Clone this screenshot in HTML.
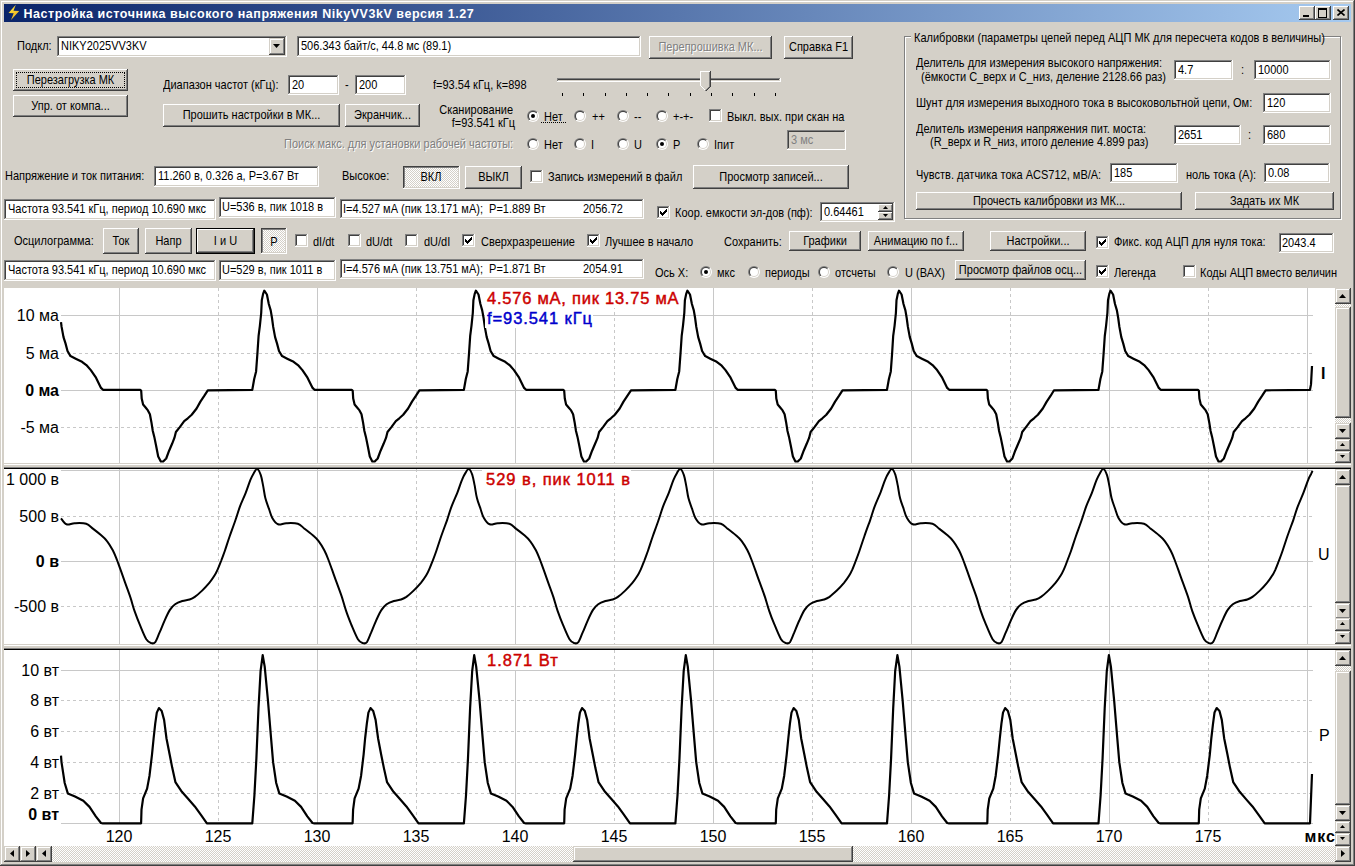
<!DOCTYPE html><html><head><meta charset="utf-8"><style>
html,body{margin:0;padding:0;width:1355px;height:866px;overflow:hidden;background:#D4D0C8}
body{position:relative;font-family:"Liberation Sans",sans-serif;font-size:11px}
body div, body svg{position:absolute}
.t{white-space:pre}
</style></head><body>
<svg width="0" height="0" style="position:absolute"><defs><linearGradient id="rgO" x1="0" y1="0" x2="1" y2="1"><stop offset="0.5" stop-color="#808080"/><stop offset="0.5" stop-color="#FFFFFF"/></linearGradient><linearGradient id="rgI" x1="0" y1="0" x2="1" y2="1"><stop offset="0.5" stop-color="#404040"/><stop offset="0.5" stop-color="#D4D0C8"/></linearGradient><pattern id="dith" width="2" height="2" patternUnits="userSpaceOnUse"><rect width="1" height="1" fill="#fff"/><rect x="1" y="1" width="1" height="1" fill="#fff"/></pattern></defs></svg>
<div style="left:0px;top:0px;width:1355px;height:866px;background:#404040"></div>
<div style="left:0px;top:0px;width:1354px;height:865px;background:#D4D0C8"></div>
<div style="left:1px;top:1px;width:1353px;height:864px;background:#808080"></div>
<div style="left:1px;top:1px;width:1352px;height:863px;background:#FFFFFF"></div>
<div style="left:2px;top:2px;width:1351px;height:862px;background:#D4D0C8"></div>
<div style="left:4px;top:4px;width:1347px;height:18px;background:linear-gradient(to right,#0A246A,#A6CAF0)"></div>
<svg style="left:0;top:0" width="24" height="24" viewBox="0 0 24 24"><defs><linearGradient id="bolt" x1="0" y1="0" x2="0.6" y2="1"><stop offset="0" stop-color="#FFEE40"/><stop offset="1" stop-color="#F0B020"/></linearGradient></defs><path d="M15.8 4.8L8.5 12.9L13.7 13.2L11 20L19.2 11.1L13.5 10.8z" fill="url(#bolt)"/></svg>
<div class="t" style="top:7px;font-size:12.5px;line-height:14.5px;color:#fff;font-weight:700;letter-spacing:0.54px;left:23.5px;">Настройка источника высокого напряжения NikyVV3kV версия 1.27</div>
<div style="left:1299px;top:6px;width:16px;height:14px;background:#404040"></div>
<div style="left:1299px;top:6px;width:15px;height:13px;background:#FFFFFF"></div>
<div style="left:1300px;top:7px;width:14px;height:12px;background:#808080"></div>
<div style="left:1300px;top:7px;width:13px;height:11px;background:#D4D0C8"></div>
<div style="left:1301px;top:8px;width:12px;height:10px;background:#D4D0C8"></div>
<div style="left:1303px;top:15px;width:6px;height:2px;background:#000"></div>
<div style="left:1315px;top:6px;width:16px;height:14px;background:#404040"></div>
<div style="left:1315px;top:6px;width:15px;height:13px;background:#FFFFFF"></div>
<div style="left:1316px;top:7px;width:14px;height:12px;background:#808080"></div>
<div style="left:1316px;top:7px;width:13px;height:11px;background:#D4D0C8"></div>
<div style="left:1317px;top:8px;width:12px;height:10px;background:#D4D0C8"></div>
<div style="left:1318px;top:8px;width:7px;height:7px;border:1px solid #000;border-top-width:2px"></div>
<div style="left:1333px;top:6px;width:16px;height:14px;background:#404040"></div>
<div style="left:1333px;top:6px;width:15px;height:13px;background:#FFFFFF"></div>
<div style="left:1334px;top:7px;width:14px;height:12px;background:#808080"></div>
<div style="left:1334px;top:7px;width:13px;height:11px;background:#D4D0C8"></div>
<div style="left:1335px;top:8px;width:12px;height:10px;background:#D4D0C8"></div>
<svg style="left:1337px;top:9px" width="8" height="7" viewBox="0 0 8 7"><path d="M0.5 0.5L7.5 6.5M7.5 0.5L0.5 6.5" stroke="#000" stroke-width="1.6"/></svg>
<div class="t" style="top:39px;font-size:11px;line-height:13px;color:#000;left:17px;transform:scaleY(1.12);transform-origin:0 2px;">Подкл:</div>
<div style="left:57px;top:36px;width:230px;height:21px;background:#FFFFFF"></div>
<div style="left:57px;top:36px;width:229px;height:20px;background:#808080"></div>
<div style="left:58px;top:37px;width:228px;height:19px;background:#D4D0C8"></div>
<div style="left:58px;top:37px;width:227px;height:18px;background:#404040"></div>
<div style="left:59px;top:38px;width:226px;height:17px;background:#fff"></div>
<div style="left:269px;top:38px;width:16px;height:17px;background:#404040"></div>
<div style="left:269px;top:38px;width:15px;height:16px;background:#D4D0C8"></div>
<div style="left:270px;top:39px;width:14px;height:15px;background:#808080"></div>
<div style="left:270px;top:39px;width:13px;height:14px;background:#FFFFFF"></div>
<div style="left:271px;top:40px;width:12px;height:13px;background:#D4D0C8"></div>
<svg style="left:273px;top:44px" width="8" height="5" viewBox="0 0 8 5"><path d="M0 0h7l-3.5 4z" fill="#000"/></svg>
<div class="t" style="top:39px;font-size:11px;line-height:13px;color:#000;left:61px;transform:scaleY(1.12);transform-origin:0 2px;">NIKY2025VV3KV</div>
<div style="left:297px;top:36px;width:344px;height:21px;background:#FFFFFF"></div>
<div style="left:297px;top:36px;width:343px;height:20px;background:#808080"></div>
<div style="left:298px;top:37px;width:342px;height:19px;background:#D4D0C8"></div>
<div style="left:298px;top:37px;width:341px;height:18px;background:#404040"></div>
<div style="left:299px;top:38px;width:340px;height:17px;background:#fff"></div>
<div class="t" style="top:39px;font-size:11px;line-height:13px;color:#000;left:301px;transform:scaleY(1.12);transform-origin:0 2px;">506.343 байт/с, 44.8 мс (89.1)</div>
<div style="left:649px;top:36px;width:123px;height:23px;background:#404040"></div>
<div style="left:649px;top:36px;width:122px;height:22px;background:#FFFFFF"></div>
<div style="left:650px;top:37px;width:121px;height:21px;background:#808080"></div>
<div style="left:650px;top:37px;width:120px;height:20px;background:#D4D0C8"></div>
<div style="left:651px;top:38px;width:119px;height:19px;background:#D4D0C8"></div>
<div class="t" style="top:41px;font-size:11px;line-height:13px;color:#fff;left:411.5px;width:600px;text-align:center;transform:scaleY(1.12);transform-origin:0 2px;">Перепрошивка МК...</div>
<div class="t" style="top:40px;font-size:11px;line-height:13px;color:#808080;left:410.5px;width:600px;text-align:center;transform:scaleY(1.12);transform-origin:0 2px;">Перепрошивка МК...</div>
<div style="left:784px;top:36px;width:69px;height:23px;background:#404040"></div>
<div style="left:784px;top:36px;width:68px;height:22px;background:#FFFFFF"></div>
<div style="left:785px;top:37px;width:67px;height:21px;background:#808080"></div>
<div style="left:785px;top:37px;width:66px;height:20px;background:#D4D0C8"></div>
<div style="left:786px;top:38px;width:65px;height:19px;background:#D4D0C8"></div>
<div class="t" style="top:40px;font-size:11px;line-height:13px;color:#000;left:518.5px;width:600px;text-align:center;transform:scaleY(1.12);transform-origin:0 2px;">Справка F1</div>
<div style="left:13px;top:69px;width:115px;height:22px;background:#404040"></div>
<div style="left:13px;top:69px;width:114px;height:21px;background:#FFFFFF"></div>
<div style="left:14px;top:70px;width:113px;height:20px;background:#808080"></div>
<div style="left:14px;top:70px;width:112px;height:19px;background:#D4D0C8"></div>
<div style="left:15px;top:71px;width:111px;height:18px;background:#D4D0C8"></div>
<div class="t" style="top:73px;font-size:11px;line-height:13px;color:#000;left:-229.5px;width:600px;text-align:center;transform:scaleY(1.12);transform-origin:0 2px;">Перезагрузка МК</div>
<div style="left:16px;top:72px;width:107px;height:14px;border:1px dotted #000"></div>
<div style="left:13px;top:95px;width:115px;height:22px;background:#404040"></div>
<div style="left:13px;top:95px;width:114px;height:21px;background:#FFFFFF"></div>
<div style="left:14px;top:96px;width:113px;height:20px;background:#808080"></div>
<div style="left:14px;top:96px;width:112px;height:19px;background:#D4D0C8"></div>
<div style="left:15px;top:97px;width:111px;height:18px;background:#D4D0C8"></div>
<div class="t" style="top:99px;font-size:11px;line-height:13px;color:#000;left:-229.5px;width:600px;text-align:center;transform:scaleY(1.12);transform-origin:0 2px;">Упр. от компа...</div>
<div class="t" style="top:78px;font-size:11px;line-height:13px;color:#000;left:163px;transform:scaleY(1.12);transform-origin:0 2px;">Диапазон частот (кГц):</div>
<div style="left:288px;top:75px;width:51px;height:20px;background:#FFFFFF"></div>
<div style="left:288px;top:75px;width:50px;height:19px;background:#808080"></div>
<div style="left:289px;top:76px;width:49px;height:18px;background:#D4D0C8"></div>
<div style="left:289px;top:76px;width:48px;height:17px;background:#404040"></div>
<div style="left:290px;top:77px;width:47px;height:16px;background:#fff"></div>
<div class="t" style="top:78px;font-size:11px;line-height:13px;color:#000;left:292px;transform:scaleY(1.12);transform-origin:0 2px;">20</div>
<div class="t" style="top:78px;font-size:11px;line-height:13px;color:#000;left:345px;transform:scaleY(1.12);transform-origin:0 2px;">-</div>
<div style="left:355px;top:75px;width:51px;height:20px;background:#FFFFFF"></div>
<div style="left:355px;top:75px;width:50px;height:19px;background:#808080"></div>
<div style="left:356px;top:76px;width:49px;height:18px;background:#D4D0C8"></div>
<div style="left:356px;top:76px;width:48px;height:17px;background:#404040"></div>
<div style="left:357px;top:77px;width:47px;height:16px;background:#fff"></div>
<div class="t" style="top:78px;font-size:11px;line-height:13px;color:#000;left:359px;transform:scaleY(1.12);transform-origin:0 2px;">200</div>
<div class="t" style="top:78px;font-size:11px;line-height:13px;color:#000;left:433px;transform:scaleY(1.12);transform-origin:0 2px;">f=93.54 кГц, k=898</div>
<div style="left:557px;top:78px;width:224px;height:4px;background:#FFFFFF"></div>
<div style="left:557px;top:78px;width:223px;height:3px;background:#808080"></div>
<div style="left:558px;top:79px;width:222px;height:2px;background:#D4D0C8"></div>
<div style="left:558px;top:79px;width:221px;height:1px;background:#404040"></div>
<div style="left:559px;top:80px;width:220px;height:0px;background:#fff"></div>
<div style="left:562px;top:93px;width:1px;height:3px;background:#000"></div>
<div style="left:583px;top:93px;width:1px;height:3px;background:#000"></div>
<div style="left:605px;top:93px;width:1px;height:3px;background:#000"></div>
<div style="left:626px;top:93px;width:1px;height:3px;background:#000"></div>
<div style="left:647px;top:93px;width:1px;height:3px;background:#000"></div>
<div style="left:668px;top:93px;width:1px;height:3px;background:#000"></div>
<div style="left:690px;top:93px;width:1px;height:3px;background:#000"></div>
<div style="left:711px;top:93px;width:1px;height:3px;background:#000"></div>
<div style="left:732px;top:93px;width:1px;height:3px;background:#000"></div>
<div style="left:754px;top:93px;width:1px;height:3px;background:#000"></div>
<div style="left:775px;top:93px;width:1px;height:3px;background:#000"></div>
<svg style="left:700px;top:71px" width="11" height="21" viewBox="0 0 11 21" shape-rendering="crispEdges"><path d="M0 0H11V15L6 20H5L0 15z" fill="#404040"/><path d="M0 0H10V15L5.5 19.5L0 15z" fill="#808080"/><path d="M0 0H10V1H1V15L5 19V20L0 15z" fill="#fff"/><path d="M1 1H9V15L5.5 18.5L1 15z" fill="#D4D0C8"/></svg>
<div style="left:163px;top:104px;width:177px;height:23px;background:#404040"></div>
<div style="left:163px;top:104px;width:176px;height:22px;background:#FFFFFF"></div>
<div style="left:164px;top:105px;width:175px;height:21px;background:#808080"></div>
<div style="left:164px;top:105px;width:174px;height:20px;background:#D4D0C8"></div>
<div style="left:165px;top:106px;width:173px;height:19px;background:#D4D0C8"></div>
<div class="t" style="top:108px;font-size:11px;line-height:13px;color:#000;left:-48.5px;width:600px;text-align:center;transform:scaleY(1.12);transform-origin:0 2px;">Прошить настройки в МК...</div>
<div style="left:345px;top:104px;width:75px;height:23px;background:#404040"></div>
<div style="left:345px;top:104px;width:74px;height:22px;background:#FFFFFF"></div>
<div style="left:346px;top:105px;width:73px;height:21px;background:#808080"></div>
<div style="left:346px;top:105px;width:72px;height:20px;background:#D4D0C8"></div>
<div style="left:347px;top:106px;width:71px;height:19px;background:#D4D0C8"></div>
<div class="t" style="top:108px;font-size:11px;line-height:13px;color:#000;left:82.5px;width:600px;text-align:center;transform:scaleY(1.12);transform-origin:0 2px;">Экранчик...</div>
<div class="t" style="top:103px;font-size:11px;line-height:13px;color:#000;right:842px;text-align:right;transform:scaleY(1.12);transform-origin:0 2px;">Сканирование</div>
<div class="t" style="top:116px;font-size:11px;line-height:13px;color:#000;right:840px;text-align:right;transform:scaleY(1.12);transform-origin:0 2px;">f=93.541 кГц</div>
<svg style="left:527px;top:110px" width="12" height="12" viewBox="0 0 12 12"><circle cx="6" cy="6" r="6" fill="url(#rgO)"/><circle cx="6" cy="6" r="5" fill="url(#rgI)"/><circle cx="6" cy="6" r="4" fill="#fff"/><circle cx="6" cy="6" r="2" fill="#000"/></svg>
<div class="t" style="top:110px;font-size:11px;line-height:13px;color:#000;left:544px;transform:scaleY(1.12);transform-origin:0 2px;">Нет</div>
<div style="left:541px;top:122px;width:25px;height:0;border-top:1px dotted #000"></div>
<svg style="left:574px;top:110px" width="12" height="12" viewBox="0 0 12 12"><circle cx="6" cy="6" r="6" fill="url(#rgO)"/><circle cx="6" cy="6" r="5" fill="url(#rgI)"/><circle cx="6" cy="6" r="4" fill="#fff"/></svg>
<div class="t" style="top:110px;font-size:11px;line-height:13px;color:#000;left:592px;transform:scaleY(1.12);transform-origin:0 2px;">++</div>
<svg style="left:617px;top:110px" width="12" height="12" viewBox="0 0 12 12"><circle cx="6" cy="6" r="6" fill="url(#rgO)"/><circle cx="6" cy="6" r="5" fill="url(#rgI)"/><circle cx="6" cy="6" r="4" fill="#fff"/></svg>
<div class="t" style="top:110px;font-size:11px;line-height:13px;color:#000;left:634px;transform:scaleY(1.12);transform-origin:0 2px;">--</div>
<svg style="left:656px;top:110px" width="12" height="12" viewBox="0 0 12 12"><circle cx="6" cy="6" r="6" fill="url(#rgO)"/><circle cx="6" cy="6" r="5" fill="url(#rgI)"/><circle cx="6" cy="6" r="4" fill="#fff"/></svg>
<div class="t" style="top:110px;font-size:11px;line-height:13px;color:#000;left:673px;transform:scaleY(1.12);transform-origin:0 2px;">+-+-</div>
<div style="left:709px;top:109px;width:13px;height:13px;background:#FFFFFF"></div>
<div style="left:709px;top:109px;width:12px;height:12px;background:#808080"></div>
<div style="left:710px;top:110px;width:11px;height:11px;background:#D4D0C8"></div>
<div style="left:710px;top:110px;width:10px;height:10px;background:#404040"></div>
<div style="left:711px;top:111px;width:9px;height:9px;background:#fff"></div>
<div class="t" style="top:110px;font-size:11px;line-height:13px;color:#000;left:727px;transform:scaleY(1.12);transform-origin:0 2px;">Выкл. вых. при скан на</div>
<div class="t" style="top:138px;font-size:11px;line-height:13px;color:#fff;left:285px;transform:scaleY(1.12);transform-origin:0 2px;">Поиск макс. для установки рабочей частоты:</div>
<div class="t" style="top:137px;font-size:11px;line-height:13px;color:#808080;left:284px;transform:scaleY(1.12);transform-origin:0 2px;">Поиск макс. для установки рабочей частоты:</div>
<svg style="left:527px;top:138px" width="12" height="12" viewBox="0 0 12 12"><circle cx="6" cy="6" r="6" fill="url(#rgO)"/><circle cx="6" cy="6" r="5" fill="url(#rgI)"/><circle cx="6" cy="6" r="4" fill="#fff"/></svg>
<div class="t" style="top:138px;font-size:11px;line-height:13px;color:#000;left:544px;transform:scaleY(1.12);transform-origin:0 2px;">Нет</div>
<svg style="left:574px;top:138px" width="12" height="12" viewBox="0 0 12 12"><circle cx="6" cy="6" r="6" fill="url(#rgO)"/><circle cx="6" cy="6" r="5" fill="url(#rgI)"/><circle cx="6" cy="6" r="4" fill="#fff"/></svg>
<div class="t" style="top:138px;font-size:11px;line-height:13px;color:#000;left:591px;transform:scaleY(1.12);transform-origin:0 2px;">I</div>
<svg style="left:617px;top:138px" width="12" height="12" viewBox="0 0 12 12"><circle cx="6" cy="6" r="6" fill="url(#rgO)"/><circle cx="6" cy="6" r="5" fill="url(#rgI)"/><circle cx="6" cy="6" r="4" fill="#fff"/></svg>
<div class="t" style="top:138px;font-size:11px;line-height:13px;color:#000;left:634px;transform:scaleY(1.12);transform-origin:0 2px;">U</div>
<svg style="left:656px;top:138px" width="12" height="12" viewBox="0 0 12 12"><circle cx="6" cy="6" r="6" fill="url(#rgO)"/><circle cx="6" cy="6" r="5" fill="url(#rgI)"/><circle cx="6" cy="6" r="4" fill="#fff"/><circle cx="6" cy="6" r="2" fill="#000"/></svg>
<div class="t" style="top:138px;font-size:11px;line-height:13px;color:#000;left:673px;transform:scaleY(1.12);transform-origin:0 2px;">P</div>
<svg style="left:697px;top:138px" width="12" height="12" viewBox="0 0 12 12"><circle cx="6" cy="6" r="6" fill="url(#rgO)"/><circle cx="6" cy="6" r="5" fill="url(#rgI)"/><circle cx="6" cy="6" r="4" fill="#fff"/></svg>
<div class="t" style="top:138px;font-size:11px;line-height:13px;color:#000;left:714px;transform:scaleY(1.12);transform-origin:0 2px;">Iпит</div>
<div style="left:787px;top:130px;width:59px;height:20px;background:#FFFFFF"></div>
<div style="left:787px;top:130px;width:58px;height:19px;background:#808080"></div>
<div style="left:788px;top:131px;width:57px;height:18px;background:#D4D0C8"></div>
<div style="left:788px;top:131px;width:56px;height:17px;background:#404040"></div>
<div style="left:789px;top:132px;width:55px;height:16px;background:#D4D0C8"></div>
<div class="t" style="top:133px;font-size:11px;line-height:13px;color:#808080;left:791px;transform:scaleY(1.12);transform-origin:0 2px;">3 мс</div>
<div class="t" style="top:169px;font-size:11px;line-height:13px;color:#000;left:5px;transform:scaleY(1.12);transform-origin:0 2px;">Напряжение и ток питания:</div>
<div style="left:154px;top:166px;width:165px;height:21px;background:#FFFFFF"></div>
<div style="left:154px;top:166px;width:164px;height:20px;background:#808080"></div>
<div style="left:155px;top:167px;width:163px;height:19px;background:#D4D0C8"></div>
<div style="left:155px;top:167px;width:162px;height:18px;background:#404040"></div>
<div style="left:156px;top:168px;width:161px;height:17px;background:#fff"></div>
<div class="t" style="top:169px;font-size:11px;line-height:13px;color:#000;left:158px;transform:scaleY(1.12);transform-origin:0 2px;">11.260 в, 0.326 а, P=3.67 Вт</div>
<div class="t" style="top:169px;font-size:11px;line-height:13px;color:#000;left:342px;transform:scaleY(1.12);transform-origin:0 2px;">Высокое:</div>
<div style="left:403px;top:166px;width:57px;height:23px;background:#FFFFFF"></div>
<div style="left:403px;top:166px;width:56px;height:22px;background:#404040"></div>
<div style="left:404px;top:167px;width:55px;height:21px;background:#D4D0C8"></div>
<div style="left:404px;top:167px;width:54px;height:20px;background:#808080"></div>
<svg style="left:405px;top:168px" width="53" height="19" shape-rendering="crispEdges"><rect width="53" height="19" fill="#D4D0C8"/><rect width="53" height="19" fill="url(#dith)"/></svg>
<div class="t" style="top:170px;font-size:11px;line-height:13px;color:#000;left:131px;width:600px;text-align:center;transform:scaleY(1.12);transform-origin:0 2px;">ВКЛ</div>
<div style="left:465px;top:166px;width:57px;height:23px;background:#404040"></div>
<div style="left:465px;top:166px;width:56px;height:22px;background:#FFFFFF"></div>
<div style="left:466px;top:167px;width:55px;height:21px;background:#808080"></div>
<div style="left:466px;top:167px;width:54px;height:20px;background:#D4D0C8"></div>
<div style="left:467px;top:168px;width:53px;height:19px;background:#D4D0C8"></div>
<div class="t" style="top:170px;font-size:11px;line-height:13px;color:#000;left:193.5px;width:600px;text-align:center;transform:scaleY(1.12);transform-origin:0 2px;">ВЫКЛ</div>
<div style="left:530px;top:170px;width:13px;height:13px;background:#FFFFFF"></div>
<div style="left:530px;top:170px;width:12px;height:12px;background:#808080"></div>
<div style="left:531px;top:171px;width:11px;height:11px;background:#D4D0C8"></div>
<div style="left:531px;top:171px;width:10px;height:10px;background:#404040"></div>
<div style="left:532px;top:172px;width:9px;height:9px;background:#fff"></div>
<div class="t" style="top:170px;font-size:11px;line-height:13px;color:#000;left:548px;transform:scaleY(1.12);transform-origin:0 2px;">Запись измерений в файл</div>
<div style="left:693px;top:165px;width:156px;height:24px;background:#404040"></div>
<div style="left:693px;top:165px;width:155px;height:23px;background:#FFFFFF"></div>
<div style="left:694px;top:166px;width:154px;height:22px;background:#808080"></div>
<div style="left:694px;top:166px;width:153px;height:21px;background:#D4D0C8"></div>
<div style="left:695px;top:167px;width:152px;height:20px;background:#D4D0C8"></div>
<div class="t" style="top:170px;font-size:11px;line-height:13px;color:#000;left:471.0px;width:600px;text-align:center;transform:scaleY(1.12);transform-origin:0 2px;">Просмотр записей...</div>
<div style="left:4px;top:199px;width:212px;height:21px;background:#FFFFFF"></div>
<div style="left:4px;top:199px;width:211px;height:20px;background:#808080"></div>
<div style="left:5px;top:200px;width:210px;height:19px;background:#D4D0C8"></div>
<div style="left:5px;top:200px;width:209px;height:18px;background:#404040"></div>
<div style="left:6px;top:201px;width:208px;height:17px;background:#fff"></div>
<div class="t" style="top:202px;font-size:11px;line-height:13px;color:#000;left:8px;transform:scaleY(1.12);transform-origin:0 2px;">Частота 93.541 кГц, период 10.690 мкс</div>
<div style="left:219px;top:197px;width:117px;height:21px;background:#FFFFFF"></div>
<div style="left:219px;top:197px;width:116px;height:20px;background:#808080"></div>
<div style="left:220px;top:198px;width:115px;height:19px;background:#D4D0C8"></div>
<div style="left:220px;top:198px;width:114px;height:18px;background:#404040"></div>
<div style="left:221px;top:199px;width:113px;height:17px;background:#fff"></div>
<div class="t" style="top:200px;font-size:11px;line-height:13px;color:#000;left:222px;transform:scaleY(1.12);transform-origin:0 2px;">U=536 в, пик 1018 в</div>
<div style="left:340px;top:199px;width:304px;height:20px;background:#FFFFFF"></div>
<div style="left:340px;top:199px;width:303px;height:19px;background:#808080"></div>
<div style="left:341px;top:200px;width:302px;height:18px;background:#D4D0C8"></div>
<div style="left:341px;top:200px;width:301px;height:17px;background:#404040"></div>
<div style="left:342px;top:201px;width:300px;height:16px;background:#fff"></div>
<div class="t" style="top:202px;font-size:11px;line-height:13px;color:#000;left:343px;transform:scaleY(1.12);transform-origin:0 2px;">I=4.527 мА (пик 13.171 мА);&nbsp; P=1.889 Вт</div>
<div class="t" style="top:202px;font-size:11px;line-height:13px;color:#000;left:583px;transform:scaleY(1.12);transform-origin:0 2px;">2056.72</div>
<div style="left:657px;top:206px;width:13px;height:13px;background:#FFFFFF"></div>
<div style="left:657px;top:206px;width:12px;height:12px;background:#808080"></div>
<div style="left:658px;top:207px;width:11px;height:11px;background:#D4D0C8"></div>
<div style="left:658px;top:207px;width:10px;height:10px;background:#404040"></div>
<div style="left:659px;top:208px;width:9px;height:9px;background:#fff"></div>
<svg style="left:660px;top:209px" width="7" height="7" viewBox="0 0 7 7" shape-rendering="crispEdges"><path d="M6 0h1v3h-1v1h-1v1h-1v1h-1v1h-1v-1h-1v-1h-1v-3h1v1h1v1h1v-1h1v-1h1v-1h1z" fill="#000"/></svg>
<div class="t" style="top:206px;font-size:11px;line-height:13px;color:#000;left:675px;transform:scaleY(1.12);transform-origin:0 2px;">Коор. емкости эл-дов (пф):</div>
<div style="left:820px;top:202px;width:75px;height:20px;background:#FFFFFF"></div>
<div style="left:820px;top:202px;width:74px;height:19px;background:#808080"></div>
<div style="left:821px;top:203px;width:73px;height:18px;background:#D4D0C8"></div>
<div style="left:821px;top:203px;width:72px;height:17px;background:#404040"></div>
<div style="left:822px;top:204px;width:71px;height:16px;background:#fff"></div>
<div class="t" style="top:205px;font-size:11px;line-height:13px;color:#000;left:824px;transform:scaleY(1.12);transform-origin:0 2px;">0.64461</div>
<div style="left:878px;top:204px;width:15px;height:8px;background:#404040"></div>
<div style="left:878px;top:204px;width:14px;height:7px;background:#FFFFFF"></div>
<div style="left:879px;top:205px;width:13px;height:6px;background:#808080"></div>
<div style="left:879px;top:205px;width:12px;height:5px;background:#D4D0C8"></div>
<div style="left:880px;top:206px;width:11px;height:4px;background:#D4D0C8"></div>
<div style="left:878px;top:212px;width:15px;height:8px;background:#404040"></div>
<div style="left:878px;top:212px;width:14px;height:7px;background:#FFFFFF"></div>
<div style="left:879px;top:213px;width:13px;height:6px;background:#808080"></div>
<div style="left:879px;top:213px;width:12px;height:5px;background:#D4D0C8"></div>
<div style="left:880px;top:214px;width:11px;height:4px;background:#D4D0C8"></div>
<svg style="left:883px;top:206px" width="5" height="3"><path d="M0 3h5L2.5 0z" fill="#000"/></svg>
<svg style="left:883px;top:214px" width="5" height="3"><path d="M0 0h5L2.5 3z" fill="#000"/></svg>
<div class="t" style="top:234px;font-size:11px;line-height:13px;color:#000;left:14px;transform:scaleY(1.12);transform-origin:0 2px;">Осцилограмма:</div>
<div style="left:103px;top:228px;width:36px;height:26px;background:#404040"></div>
<div style="left:103px;top:228px;width:35px;height:25px;background:#FFFFFF"></div>
<div style="left:104px;top:229px;width:34px;height:24px;background:#808080"></div>
<div style="left:104px;top:229px;width:33px;height:23px;background:#D4D0C8"></div>
<div style="left:105px;top:230px;width:32px;height:22px;background:#D4D0C8"></div>
<div class="t" style="top:234px;font-size:11px;line-height:13px;color:#000;left:-179.0px;width:600px;text-align:center;transform:scaleY(1.12);transform-origin:0 2px;">Ток</div>
<div style="left:145px;top:228px;width:47px;height:26px;background:#404040"></div>
<div style="left:145px;top:228px;width:46px;height:25px;background:#FFFFFF"></div>
<div style="left:146px;top:229px;width:45px;height:24px;background:#808080"></div>
<div style="left:146px;top:229px;width:44px;height:23px;background:#D4D0C8"></div>
<div style="left:147px;top:230px;width:43px;height:22px;background:#D4D0C8"></div>
<div class="t" style="top:234px;font-size:11px;line-height:13px;color:#000;left:-131.5px;width:600px;text-align:center;transform:scaleY(1.12);transform-origin:0 2px;">Напр</div>
<div style="left:196px;top:228px;width:59px;height:26px;background:#000"></div>
<div style="left:197px;top:229px;width:57px;height:24px;background:#404040"></div>
<div style="left:197px;top:229px;width:56px;height:23px;background:#FFFFFF"></div>
<div style="left:198px;top:230px;width:55px;height:22px;background:#808080"></div>
<div style="left:198px;top:230px;width:54px;height:21px;background:#D4D0C8"></div>
<div style="left:199px;top:231px;width:53px;height:20px;background:#D4D0C8"></div>
<div class="t" style="top:234px;font-size:11px;line-height:13px;color:#000;left:-74.5px;width:600px;text-align:center;transform:scaleY(1.12);transform-origin:0 2px;">I и U</div>
<div style="left:261px;top:228px;width:26px;height:26px;background:#FFFFFF"></div>
<div style="left:261px;top:228px;width:25px;height:25px;background:#404040"></div>
<div style="left:262px;top:229px;width:24px;height:24px;background:#D4D0C8"></div>
<div style="left:262px;top:229px;width:23px;height:23px;background:#808080"></div>
<svg style="left:263px;top:230px" width="22" height="22" shape-rendering="crispEdges"><rect width="22" height="22" fill="#D4D0C8"/><rect width="22" height="22" fill="url(#dith)"/></svg>
<div class="t" style="top:235px;font-size:11px;line-height:13px;color:#000;left:-26px;width:600px;text-align:center;transform:scaleY(1.12);transform-origin:0 2px;">P</div>
<div style="left:295px;top:234px;width:13px;height:13px;background:#FFFFFF"></div>
<div style="left:295px;top:234px;width:12px;height:12px;background:#808080"></div>
<div style="left:296px;top:235px;width:11px;height:11px;background:#D4D0C8"></div>
<div style="left:296px;top:235px;width:10px;height:10px;background:#404040"></div>
<div style="left:297px;top:236px;width:9px;height:9px;background:#fff"></div>
<div class="t" style="top:235px;font-size:11px;line-height:13px;color:#000;left:313px;transform:scaleY(1.12);transform-origin:0 2px;">dI/dt</div>
<div style="left:348px;top:234px;width:13px;height:13px;background:#FFFFFF"></div>
<div style="left:348px;top:234px;width:12px;height:12px;background:#808080"></div>
<div style="left:349px;top:235px;width:11px;height:11px;background:#D4D0C8"></div>
<div style="left:349px;top:235px;width:10px;height:10px;background:#404040"></div>
<div style="left:350px;top:236px;width:9px;height:9px;background:#fff"></div>
<div class="t" style="top:235px;font-size:11px;line-height:13px;color:#000;left:366px;transform:scaleY(1.12);transform-origin:0 2px;">dU/dt</div>
<div style="left:405px;top:234px;width:13px;height:13px;background:#FFFFFF"></div>
<div style="left:405px;top:234px;width:12px;height:12px;background:#808080"></div>
<div style="left:406px;top:235px;width:11px;height:11px;background:#D4D0C8"></div>
<div style="left:406px;top:235px;width:10px;height:10px;background:#404040"></div>
<div style="left:407px;top:236px;width:9px;height:9px;background:#fff"></div>
<div class="t" style="top:235px;font-size:11px;line-height:13px;color:#000;left:424px;transform:scaleY(1.12);transform-origin:0 2px;">dU/dI</div>
<div style="left:462px;top:234px;width:13px;height:13px;background:#FFFFFF"></div>
<div style="left:462px;top:234px;width:12px;height:12px;background:#808080"></div>
<div style="left:463px;top:235px;width:11px;height:11px;background:#D4D0C8"></div>
<div style="left:463px;top:235px;width:10px;height:10px;background:#404040"></div>
<div style="left:464px;top:236px;width:9px;height:9px;background:#fff"></div>
<svg style="left:465px;top:237px" width="7" height="7" viewBox="0 0 7 7" shape-rendering="crispEdges"><path d="M6 0h1v3h-1v1h-1v1h-1v1h-1v1h-1v-1h-1v-1h-1v-3h1v1h1v1h1v-1h1v-1h1v-1h1z" fill="#000"/></svg>
<div class="t" style="top:235px;font-size:11px;line-height:13px;color:#000;left:481px;transform:scaleY(1.12);transform-origin:0 2px;">Сверхразрешение</div>
<div style="left:587px;top:234px;width:13px;height:13px;background:#FFFFFF"></div>
<div style="left:587px;top:234px;width:12px;height:12px;background:#808080"></div>
<div style="left:588px;top:235px;width:11px;height:11px;background:#D4D0C8"></div>
<div style="left:588px;top:235px;width:10px;height:10px;background:#404040"></div>
<div style="left:589px;top:236px;width:9px;height:9px;background:#fff"></div>
<svg style="left:590px;top:237px" width="7" height="7" viewBox="0 0 7 7" shape-rendering="crispEdges"><path d="M6 0h1v3h-1v1h-1v1h-1v1h-1v1h-1v-1h-1v-1h-1v-3h1v1h1v1h1v-1h1v-1h1v-1h1z" fill="#000"/></svg>
<div class="t" style="top:235px;font-size:11px;line-height:13px;color:#000;left:605px;transform:scaleY(1.12);transform-origin:0 2px;">Лучшее в начало</div>
<div class="t" style="top:235px;font-size:11px;line-height:13px;color:#000;left:724px;transform:scaleY(1.12);transform-origin:0 2px;">Сохранить:</div>
<div style="left:789px;top:231px;width:72px;height:20px;background:#404040"></div>
<div style="left:789px;top:231px;width:71px;height:19px;background:#FFFFFF"></div>
<div style="left:790px;top:232px;width:70px;height:18px;background:#808080"></div>
<div style="left:790px;top:232px;width:69px;height:17px;background:#D4D0C8"></div>
<div style="left:791px;top:233px;width:68px;height:16px;background:#D4D0C8"></div>
<div class="t" style="top:234px;font-size:11px;line-height:13px;color:#000;left:525.0px;width:600px;text-align:center;transform:scaleY(1.12);transform-origin:0 2px;">Графики</div>
<div style="left:868px;top:231px;width:96px;height:20px;background:#404040"></div>
<div style="left:868px;top:231px;width:95px;height:19px;background:#FFFFFF"></div>
<div style="left:869px;top:232px;width:94px;height:18px;background:#808080"></div>
<div style="left:869px;top:232px;width:93px;height:17px;background:#D4D0C8"></div>
<div style="left:870px;top:233px;width:92px;height:16px;background:#D4D0C8"></div>
<div class="t" style="top:234px;font-size:11px;line-height:13px;color:#000;left:616.0px;width:600px;text-align:center;transform:scaleY(1.12);transform-origin:0 2px;">Анимацию по f...</div>
<div style="left:990px;top:231px;width:96px;height:20px;background:#404040"></div>
<div style="left:990px;top:231px;width:95px;height:19px;background:#FFFFFF"></div>
<div style="left:991px;top:232px;width:94px;height:18px;background:#808080"></div>
<div style="left:991px;top:232px;width:93px;height:17px;background:#D4D0C8"></div>
<div style="left:992px;top:233px;width:92px;height:16px;background:#D4D0C8"></div>
<div class="t" style="top:234px;font-size:11px;line-height:13px;color:#000;left:738.0px;width:600px;text-align:center;transform:scaleY(1.12);transform-origin:0 2px;">Настройки...</div>
<div style="left:1096px;top:236px;width:13px;height:13px;background:#FFFFFF"></div>
<div style="left:1096px;top:236px;width:12px;height:12px;background:#808080"></div>
<div style="left:1097px;top:237px;width:11px;height:11px;background:#D4D0C8"></div>
<div style="left:1097px;top:237px;width:10px;height:10px;background:#404040"></div>
<div style="left:1098px;top:238px;width:9px;height:9px;background:#fff"></div>
<svg style="left:1099px;top:239px" width="7" height="7" viewBox="0 0 7 7" shape-rendering="crispEdges"><path d="M6 0h1v3h-1v1h-1v1h-1v1h-1v1h-1v-1h-1v-1h-1v-3h1v1h1v1h1v-1h1v-1h1v-1h1z" fill="#000"/></svg>
<div class="t" style="top:235px;font-size:11px;line-height:13px;color:#000;left:1114px;transform:scaleY(1.12);transform-origin:0 2px;">Фикс. код АЦП для нуля тока:</div>
<div style="left:1279px;top:233px;width:55px;height:20px;background:#FFFFFF"></div>
<div style="left:1279px;top:233px;width:54px;height:19px;background:#808080"></div>
<div style="left:1280px;top:234px;width:53px;height:18px;background:#D4D0C8"></div>
<div style="left:1280px;top:234px;width:52px;height:17px;background:#404040"></div>
<div style="left:1281px;top:235px;width:51px;height:16px;background:#fff"></div>
<div class="t" style="top:236px;font-size:11px;line-height:13px;color:#000;left:1282px;transform:scaleY(1.12);transform-origin:0 2px;">2043.4</div>
<div style="left:4px;top:260px;width:212px;height:21px;background:#FFFFFF"></div>
<div style="left:4px;top:260px;width:211px;height:20px;background:#808080"></div>
<div style="left:5px;top:261px;width:210px;height:19px;background:#D4D0C8"></div>
<div style="left:5px;top:261px;width:209px;height:18px;background:#404040"></div>
<div style="left:6px;top:262px;width:208px;height:17px;background:#fff"></div>
<div class="t" style="top:263px;font-size:11px;line-height:13px;color:#000;left:8px;transform:scaleY(1.12);transform-origin:0 2px;">Частота 93.541 кГц, период 10.690 мкс</div>
<div style="left:219px;top:260px;width:117px;height:21px;background:#FFFFFF"></div>
<div style="left:219px;top:260px;width:116px;height:20px;background:#808080"></div>
<div style="left:220px;top:261px;width:115px;height:19px;background:#D4D0C8"></div>
<div style="left:220px;top:261px;width:114px;height:18px;background:#404040"></div>
<div style="left:221px;top:262px;width:113px;height:17px;background:#fff"></div>
<div class="t" style="top:263px;font-size:11px;line-height:13px;color:#000;left:222px;transform:scaleY(1.12);transform-origin:0 2px;">U=529 в, пик 1011 в</div>
<div style="left:340px;top:259px;width:304px;height:20px;background:#FFFFFF"></div>
<div style="left:340px;top:259px;width:303px;height:19px;background:#808080"></div>
<div style="left:341px;top:260px;width:302px;height:18px;background:#D4D0C8"></div>
<div style="left:341px;top:260px;width:301px;height:17px;background:#404040"></div>
<div style="left:342px;top:261px;width:300px;height:16px;background:#fff"></div>
<div class="t" style="top:262px;font-size:11px;line-height:13px;color:#000;left:343px;transform:scaleY(1.12);transform-origin:0 2px;">I=4.576 мА (пик 13.751 мА);&nbsp; P=1.871 Вт</div>
<div class="t" style="top:262px;font-size:11px;line-height:13px;color:#000;left:583px;transform:scaleY(1.12);transform-origin:0 2px;">2054.91</div>
<div class="t" style="top:266px;font-size:11px;line-height:13px;color:#000;left:655px;transform:scaleY(1.12);transform-origin:0 2px;">Ось X:</div>
<svg style="left:700px;top:266px" width="12" height="12" viewBox="0 0 12 12"><circle cx="6" cy="6" r="6" fill="url(#rgO)"/><circle cx="6" cy="6" r="5" fill="url(#rgI)"/><circle cx="6" cy="6" r="4" fill="#fff"/><circle cx="6" cy="6" r="2" fill="#000"/></svg>
<div class="t" style="top:266px;font-size:11px;line-height:13px;color:#000;left:717px;transform:scaleY(1.12);transform-origin:0 2px;">мкс</div>
<svg style="left:748px;top:266px" width="12" height="12" viewBox="0 0 12 12"><circle cx="6" cy="6" r="6" fill="url(#rgO)"/><circle cx="6" cy="6" r="5" fill="url(#rgI)"/><circle cx="6" cy="6" r="4" fill="#fff"/></svg>
<div class="t" style="top:266px;font-size:11px;line-height:13px;color:#000;left:765px;transform:scaleY(1.12);transform-origin:0 2px;">периоды</div>
<svg style="left:818px;top:266px" width="12" height="12" viewBox="0 0 12 12"><circle cx="6" cy="6" r="6" fill="url(#rgO)"/><circle cx="6" cy="6" r="5" fill="url(#rgI)"/><circle cx="6" cy="6" r="4" fill="#fff"/></svg>
<div class="t" style="top:266px;font-size:11px;line-height:13px;color:#000;left:835px;transform:scaleY(1.12);transform-origin:0 2px;">отсчеты</div>
<svg style="left:887px;top:266px" width="12" height="12" viewBox="0 0 12 12"><circle cx="6" cy="6" r="6" fill="url(#rgO)"/><circle cx="6" cy="6" r="5" fill="url(#rgI)"/><circle cx="6" cy="6" r="4" fill="#fff"/></svg>
<div class="t" style="top:266px;font-size:11px;line-height:13px;color:#000;left:905px;transform:scaleY(1.12);transform-origin:0 2px;">U (ВАХ)</div>
<div style="left:955px;top:260px;width:131px;height:20px;background:#404040"></div>
<div style="left:955px;top:260px;width:130px;height:19px;background:#FFFFFF"></div>
<div style="left:956px;top:261px;width:129px;height:18px;background:#808080"></div>
<div style="left:956px;top:261px;width:128px;height:17px;background:#D4D0C8"></div>
<div style="left:957px;top:262px;width:127px;height:16px;background:#D4D0C8"></div>
<div class="t" style="top:263px;font-size:11px;line-height:13px;color:#000;left:720.5px;width:600px;text-align:center;transform:scaleY(1.12);transform-origin:0 2px;">Просмотр файлов осц...</div>
<div style="left:1096px;top:265px;width:13px;height:13px;background:#FFFFFF"></div>
<div style="left:1096px;top:265px;width:12px;height:12px;background:#808080"></div>
<div style="left:1097px;top:266px;width:11px;height:11px;background:#D4D0C8"></div>
<div style="left:1097px;top:266px;width:10px;height:10px;background:#404040"></div>
<div style="left:1098px;top:267px;width:9px;height:9px;background:#fff"></div>
<svg style="left:1099px;top:268px" width="7" height="7" viewBox="0 0 7 7" shape-rendering="crispEdges"><path d="M6 0h1v3h-1v1h-1v1h-1v1h-1v1h-1v-1h-1v-1h-1v-3h1v1h1v1h1v-1h1v-1h1v-1h1z" fill="#000"/></svg>
<div class="t" style="top:266px;font-size:11px;line-height:13px;color:#000;left:1114px;transform:scaleY(1.12);transform-origin:0 2px;">Легенда</div>
<div style="left:1183px;top:265px;width:13px;height:13px;background:#FFFFFF"></div>
<div style="left:1183px;top:265px;width:12px;height:12px;background:#808080"></div>
<div style="left:1184px;top:266px;width:11px;height:11px;background:#D4D0C8"></div>
<div style="left:1184px;top:266px;width:10px;height:10px;background:#404040"></div>
<div style="left:1185px;top:267px;width:9px;height:9px;background:#fff"></div>
<div class="t" style="top:266px;font-size:11px;line-height:13px;color:#000;left:1200px;transform:scaleY(1.12);transform-origin:0 2px;">Коды АЦП вместо величин</div>
<div style="left:904px;top:36px;width:435px;height:181px;border:1px solid #808080;box-shadow:1px 1px 0 #fff, inset 1px 1px 0 #fff"></div>
<div style="left:911px;top:30px;width:411px;height:14px;background:#D4D0C8"></div>
<div class="t" style="top:31px;font-size:11px;line-height:13px;color:#000;left:914px;transform:scaleY(1.12);transform-origin:0 2px;">Калибровки (параметры цепей перед АЦП МК для пересчета кодов в величины)</div>
<div class="t" style="top:56px;font-size:11px;line-height:13px;color:#000;left:916px;transform:scaleY(1.12);transform-origin:0 2px;">Делитель для измерения высокого напряжения:</div>
<div class="t" style="top:70px;font-size:11px;line-height:13px;color:#000;left:921px;transform:scaleY(1.12);transform-origin:0 2px;">(ёмкости C_верх и С_низ, деление 2128.66 раз)</div>
<div style="left:1174px;top:60px;width:59px;height:20px;background:#FFFFFF"></div>
<div style="left:1174px;top:60px;width:58px;height:19px;background:#808080"></div>
<div style="left:1175px;top:61px;width:57px;height:18px;background:#D4D0C8"></div>
<div style="left:1175px;top:61px;width:56px;height:17px;background:#404040"></div>
<div style="left:1176px;top:62px;width:55px;height:16px;background:#fff"></div>
<div class="t" style="top:63px;font-size:11px;line-height:13px;color:#000;left:1178px;transform:scaleY(1.12);transform-origin:0 2px;">4.7</div>
<div class="t" style="top:63px;font-size:11px;line-height:13px;color:#000;left:1241px;transform:scaleY(1.12);transform-origin:0 2px;">:</div>
<div style="left:1254px;top:60px;width:77px;height:20px;background:#FFFFFF"></div>
<div style="left:1254px;top:60px;width:76px;height:19px;background:#808080"></div>
<div style="left:1255px;top:61px;width:75px;height:18px;background:#D4D0C8"></div>
<div style="left:1255px;top:61px;width:74px;height:17px;background:#404040"></div>
<div style="left:1256px;top:62px;width:73px;height:16px;background:#fff"></div>
<div class="t" style="top:63px;font-size:11px;line-height:13px;color:#000;left:1258px;transform:scaleY(1.12);transform-origin:0 2px;">10000</div>
<div class="t" style="top:96px;font-size:11px;line-height:13px;color:#000;left:916px;transform:scaleY(1.12);transform-origin:0 2px;">Шунт для измерения выходного тока в высоковольтной цепи, Ом:</div>
<div style="left:1263px;top:93px;width:68px;height:20px;background:#FFFFFF"></div>
<div style="left:1263px;top:93px;width:67px;height:19px;background:#808080"></div>
<div style="left:1264px;top:94px;width:66px;height:18px;background:#D4D0C8"></div>
<div style="left:1264px;top:94px;width:65px;height:17px;background:#404040"></div>
<div style="left:1265px;top:95px;width:64px;height:16px;background:#fff"></div>
<div class="t" style="top:96px;font-size:11px;line-height:13px;color:#000;left:1267px;transform:scaleY(1.12);transform-origin:0 2px;">120</div>
<div class="t" style="top:122px;font-size:11px;line-height:13px;color:#000;left:916px;transform:scaleY(1.12);transform-origin:0 2px;">Делитель измерения напряжения пит. моста:</div>
<div class="t" style="top:135px;font-size:11px;line-height:13px;color:#000;left:930px;transform:scaleY(1.12);transform-origin:0 2px;">(R_верх и R_низ, итого деление 4.899 раз)</div>
<div style="left:1174px;top:125px;width:67px;height:20px;background:#FFFFFF"></div>
<div style="left:1174px;top:125px;width:66px;height:19px;background:#808080"></div>
<div style="left:1175px;top:126px;width:65px;height:18px;background:#D4D0C8"></div>
<div style="left:1175px;top:126px;width:64px;height:17px;background:#404040"></div>
<div style="left:1176px;top:127px;width:63px;height:16px;background:#fff"></div>
<div class="t" style="top:128px;font-size:11px;line-height:13px;color:#000;left:1178px;transform:scaleY(1.12);transform-origin:0 2px;">2651</div>
<div class="t" style="top:128px;font-size:11px;line-height:13px;color:#000;left:1248px;transform:scaleY(1.12);transform-origin:0 2px;">:</div>
<div style="left:1263px;top:125px;width:68px;height:20px;background:#FFFFFF"></div>
<div style="left:1263px;top:125px;width:67px;height:19px;background:#808080"></div>
<div style="left:1264px;top:126px;width:66px;height:18px;background:#D4D0C8"></div>
<div style="left:1264px;top:126px;width:65px;height:17px;background:#404040"></div>
<div style="left:1265px;top:127px;width:64px;height:16px;background:#fff"></div>
<div class="t" style="top:128px;font-size:11px;line-height:13px;color:#000;left:1267px;transform:scaleY(1.12);transform-origin:0 2px;">680</div>
<div class="t" style="top:168px;font-size:11px;line-height:13px;color:#000;left:916px;transform:scaleY(1.12);transform-origin:0 2px;">Чувств. датчика тока ACS712, мВ/А:</div>
<div style="left:1110px;top:163px;width:68px;height:20px;background:#FFFFFF"></div>
<div style="left:1110px;top:163px;width:67px;height:19px;background:#808080"></div>
<div style="left:1111px;top:164px;width:66px;height:18px;background:#D4D0C8"></div>
<div style="left:1111px;top:164px;width:65px;height:17px;background:#404040"></div>
<div style="left:1112px;top:165px;width:64px;height:16px;background:#fff"></div>
<div class="t" style="top:166px;font-size:11px;line-height:13px;color:#000;left:1114px;transform:scaleY(1.12);transform-origin:0 2px;">185</div>
<div class="t" style="top:168px;font-size:11px;line-height:13px;color:#000;left:1186px;transform:scaleY(1.12);transform-origin:0 2px;">ноль тока (А):</div>
<div style="left:1264px;top:163px;width:66px;height:20px;background:#FFFFFF"></div>
<div style="left:1264px;top:163px;width:65px;height:19px;background:#808080"></div>
<div style="left:1265px;top:164px;width:64px;height:18px;background:#D4D0C8"></div>
<div style="left:1265px;top:164px;width:63px;height:17px;background:#404040"></div>
<div style="left:1266px;top:165px;width:62px;height:16px;background:#fff"></div>
<div class="t" style="top:166px;font-size:11px;line-height:13px;color:#000;left:1268px;transform:scaleY(1.12);transform-origin:0 2px;">0.08</div>
<div style="left:916px;top:192px;width:266px;height:18px;background:#404040"></div>
<div style="left:916px;top:192px;width:265px;height:17px;background:#FFFFFF"></div>
<div style="left:917px;top:193px;width:264px;height:16px;background:#808080"></div>
<div style="left:917px;top:193px;width:263px;height:15px;background:#D4D0C8"></div>
<div style="left:918px;top:194px;width:262px;height:14px;background:#D4D0C8"></div>
<div class="t" style="top:194px;font-size:11px;line-height:13px;color:#000;left:749.0px;width:600px;text-align:center;transform:scaleY(1.12);transform-origin:0 2px;">Прочесть калибровки из МК...</div>
<div style="left:1195px;top:192px;width:139px;height:18px;background:#404040"></div>
<div style="left:1195px;top:192px;width:138px;height:17px;background:#FFFFFF"></div>
<div style="left:1196px;top:193px;width:137px;height:16px;background:#808080"></div>
<div style="left:1196px;top:193px;width:136px;height:15px;background:#D4D0C8"></div>
<div style="left:1197px;top:194px;width:135px;height:14px;background:#D4D0C8"></div>
<div class="t" style="top:194px;font-size:11px;line-height:13px;color:#000;left:964.5px;width:600px;text-align:center;transform:scaleY(1.12);transform-origin:0 2px;">Задать их МК</div>
<div style="left:4px;top:288px;width:1331px;height:175px;background:#fff"></div>
<div style="left:4px;top:463px;width:1347px;height:1px;background:#D4D0C8"></div>
<div style="left:4px;top:464px;width:1347px;height:1px;background:#FFFFFF"></div>
<div style="left:4px;top:465px;width:1347px;height:2px;background:#D4D0C8"></div>
<div style="left:4px;top:467px;width:1347px;height:1px;background:#808080"></div>
<div style="left:4px;top:468px;width:1347px;height:1px;background:#000"></div>
<div style="left:4px;top:469px;width:1331px;height:175px;background:#fff"></div>
<div style="left:4px;top:644px;width:1347px;height:1px;background:#D4D0C8"></div>
<div style="left:4px;top:645px;width:1347px;height:1px;background:#FFFFFF"></div>
<div style="left:4px;top:646px;width:1347px;height:2px;background:#D4D0C8"></div>
<div style="left:4px;top:648px;width:1347px;height:1px;background:#808080"></div>
<div style="left:4px;top:649px;width:1347px;height:1px;background:#000"></div>
<div style="left:4px;top:650px;width:1331px;height:196px;background:#fff"></div>
<svg style="left:0;top:0" width="1355" height="866" viewBox="0 0 1355 866" shape-rendering="auto"><path d="M61 315.5H1313" stroke="#C8C8C8"/><path d="M61 353.5H1313" stroke="#C8C8C8" stroke-dasharray="3 3"/><path d="M61 390.5H1313" stroke="#C8C8C8"/><path d="M61 427.5H1313" stroke="#C8C8C8" stroke-dasharray="3 3"/><path d="M119.5 288V463" stroke="#C8C8C8"/><path d="M218.5 288V463" stroke="#C8C8C8" stroke-dasharray="3 3"/><path d="M317.5 288V463" stroke="#C8C8C8"/><path d="M416.5 288V463" stroke="#C8C8C8" stroke-dasharray="3 3"/><path d="M515.5 288V463" stroke="#C8C8C8"/><path d="M614.5 288V463" stroke="#C8C8C8" stroke-dasharray="3 3"/><path d="M713.5 288V463" stroke="#C8C8C8"/><path d="M812.5 288V463" stroke="#C8C8C8" stroke-dasharray="3 3"/><path d="M911.5 288V463" stroke="#C8C8C8"/><path d="M1010.5 288V463" stroke="#C8C8C8" stroke-dasharray="3 3"/><path d="M1109.5 288V463" stroke="#C8C8C8"/><path d="M1208.5 288V463" stroke="#C8C8C8" stroke-dasharray="3 3"/><path d="M1307.5 288V463" stroke="#C8C8C8"/><path d="M61 470.5H1313" stroke="#C8C8C8"/><path d="M61 516.5H1313" stroke="#C8C8C8" stroke-dasharray="3 3"/><path d="M61 561.5H1313" stroke="#C8C8C8"/><path d="M61 606.5H1313" stroke="#C8C8C8" stroke-dasharray="3 3"/><path d="M119.5 469V644" stroke="#C8C8C8"/><path d="M218.5 469V644" stroke="#C8C8C8" stroke-dasharray="3 3"/><path d="M317.5 469V644" stroke="#C8C8C8"/><path d="M416.5 469V644" stroke="#C8C8C8" stroke-dasharray="3 3"/><path d="M515.5 469V644" stroke="#C8C8C8"/><path d="M614.5 469V644" stroke="#C8C8C8" stroke-dasharray="3 3"/><path d="M713.5 469V644" stroke="#C8C8C8"/><path d="M812.5 469V644" stroke="#C8C8C8" stroke-dasharray="3 3"/><path d="M911.5 469V644" stroke="#C8C8C8"/><path d="M1010.5 469V644" stroke="#C8C8C8" stroke-dasharray="3 3"/><path d="M1109.5 469V644" stroke="#C8C8C8"/><path d="M1208.5 469V644" stroke="#C8C8C8" stroke-dasharray="3 3"/><path d="M1307.5 469V644" stroke="#C8C8C8"/><path d="M61 670.5H1313" stroke="#C8C8C8"/><path d="M61 700.5H1313" stroke="#C8C8C8" stroke-dasharray="3 3"/><path d="M61 731.5H1313" stroke="#C8C8C8" stroke-dasharray="3 3"/><path d="M61 762.5H1313" stroke="#C8C8C8" stroke-dasharray="3 3"/><path d="M61 793.5H1313" stroke="#C8C8C8" stroke-dasharray="3 3"/><path d="M61 823.5H1313" stroke="#C8C8C8"/><path d="M119.5 650V824" stroke="#C8C8C8"/><path d="M218.5 650V824" stroke="#C8C8C8" stroke-dasharray="3 3"/><path d="M317.5 650V824" stroke="#C8C8C8"/><path d="M416.5 650V824" stroke="#C8C8C8" stroke-dasharray="3 3"/><path d="M515.5 650V824" stroke="#C8C8C8"/><path d="M614.5 650V824" stroke="#C8C8C8" stroke-dasharray="3 3"/><path d="M713.5 650V824" stroke="#C8C8C8"/><path d="M812.5 650V824" stroke="#C8C8C8" stroke-dasharray="3 3"/><path d="M911.5 650V824" stroke="#C8C8C8"/><path d="M1010.5 650V824" stroke="#C8C8C8" stroke-dasharray="3 3"/><path d="M1109.5 650V824" stroke="#C8C8C8"/><path d="M1208.5 650V824" stroke="#C8C8C8" stroke-dasharray="3 3"/><path d="M1307.5 650V824" stroke="#C8C8C8"/><path d="M61.0 322.1 61.6 326.9 63.5 337.1 65.5 343.4 67.5 351.0 70.5 356.1 75.7 358.7 82.0 361.8 87.0 365.7 90.8 370.1 96.0 377.7 101.0 387.9 103.0 389.8 140.2 389.8 141.2 390.8 141.7 398.6 143.1 404.5 145.6 407.5 147.9 410.4 149.9 414.3 151.4 422.2 152.8 431.0 154.3 436.9 156.3 446.7 158.2 456.5 160.8 461.5 163.2 461.5 166.2 458.5 169.1 450.7 172.1 443.8 174.4 437.9 175.9 432.0 179.8 427.1 184.2 421.2 187.8 418.3 191.7 414.8 196.6 408.5 200.4 401.6 204.4 395.7 207.8 390.3 252.3 389.8 252.3 389.8 254.2 379.0 256.1 371.4 257.4 353.6 258.6 335.8 259.9 325.6 261.2 313.0 261.8 300.2 263.1 293.9 264.3 290.7 266.9 294.5 268.8 304.0 270.7 310.4 272.0 318.0 273.2 326.9 275.1 337.1 277.0 343.4 279.0 351.0 282.1 356.1 287.2 358.7 293.6 361.8 298.6 365.7 302.4 370.1 307.5 377.7 312.6 387.9 314.5 389.8 351.7 389.8 352.7 390.8 353.2 398.6 354.6 404.5 357.1 407.5 359.5 410.4 361.5 414.3 363.0 422.2 364.4 431.0 365.9 436.9 367.9 446.7 369.8 456.5 372.3 461.5 374.7 461.5 377.7 458.5 380.6 450.7 383.6 443.8 386.0 437.9 387.5 432.0 391.4 427.1 395.8 421.2 399.3 418.3 403.2 414.8 408.1 408.5 412.0 401.6 416.0 395.7 419.4 390.3 463.9 389.8 463.9 389.8 465.8 379.0 467.7 371.4 469.0 353.6 470.2 335.8 471.5 325.6 472.8 313.0 473.4 300.2 474.7 293.9 475.9 290.7 478.5 294.5 480.4 304.0 482.2 310.4 483.6 318.0 484.8 326.9 486.7 337.1 488.6 343.4 490.6 351.0 493.7 356.1 498.8 358.7 505.2 361.8 510.2 365.7 514.0 370.1 519.1 377.7 524.1 387.9 526.1 389.8 563.2 389.8 564.2 390.8 564.8 398.6 566.1 404.5 568.6 407.5 571.1 410.4 573.1 414.3 574.6 422.2 576.0 431.0 577.5 436.9 579.5 446.7 581.4 456.5 583.9 461.5 586.2 461.5 589.2 458.5 592.1 450.7 595.1 443.8 597.6 437.9 599.1 432.0 603.0 427.1 607.4 421.2 610.9 418.3 614.8 414.8 619.7 408.5 623.5 401.6 627.5 395.7 631.0 390.3 675.4 389.8 675.4 389.8 677.3 379.0 679.2 371.4 680.5 353.6 681.7 335.8 683.0 325.6 684.3 313.0 684.9 300.2 686.2 293.9 687.4 290.7 690.0 294.5 691.9 304.0 693.8 310.4 695.1 318.0 696.3 326.9 698.2 337.1 700.1 343.4 702.1 351.0 705.2 356.1 710.3 358.7 716.7 361.8 721.7 365.7 725.5 370.1 730.6 377.7 735.7 387.9 737.6 389.8 774.8 389.8 775.8 390.8 776.3 398.6 777.7 404.5 780.2 407.5 782.6 410.4 784.6 414.3 786.1 422.2 787.5 431.0 789.0 436.9 791.0 446.7 792.9 456.5 795.4 461.5 797.8 461.5 800.8 458.5 803.7 450.7 806.7 443.8 809.1 437.9 810.6 432.0 814.5 427.1 818.9 421.2 822.4 418.3 826.3 414.8 831.2 408.5 835.1 401.6 839.1 395.7 842.5 390.3 887.0 389.8 887.0 389.8 888.9 379.0 890.8 371.4 892.1 353.6 893.2 335.8 894.6 325.6 895.9 313.0 896.5 300.2 897.8 293.9 899.0 290.7 901.6 294.5 903.5 304.0 905.4 310.4 906.7 318.0 907.9 326.9 909.8 337.1 911.7 343.4 913.7 351.0 916.8 356.1 921.9 358.7 928.2 361.8 933.2 365.7 937.1 370.1 942.2 377.7 947.2 387.9 949.2 389.8 986.4 389.8 987.4 390.8 987.9 398.6 989.2 404.5 991.8 407.5 994.2 410.4 996.2 414.3 997.7 422.2 999.1 431.0 1000.6 436.9 1002.6 446.7 1004.5 456.5 1007.0 461.5 1009.4 461.5 1012.4 458.5 1015.2 450.7 1018.2 443.8 1020.7 437.9 1022.2 432.0 1026.0 427.1 1030.5 421.2 1034.0 418.3 1037.9 414.8 1042.8 408.5 1046.7 401.6 1050.7 395.7 1054.0 390.3 1098.5 389.8 1098.5 389.8 1100.4 379.0 1102.3 371.4 1103.6 353.6 1104.8 335.8 1106.1 325.6 1107.4 313.0 1108.0 300.2 1109.3 293.9 1110.5 290.7 1113.1 294.5 1115.0 304.0 1116.9 310.4 1118.2 318.0 1119.4 326.9 1121.3 337.1 1123.2 343.4 1125.2 351.0 1128.3 356.1 1133.4 358.7 1139.8 361.8 1144.8 365.7 1148.6 370.1 1153.7 377.7 1158.8 387.9 1160.7 389.8 1197.9 389.8 1198.9 390.8 1199.4 398.6 1200.8 404.5 1203.3 407.5 1205.7 410.4 1207.7 414.3 1209.2 422.2 1210.6 431.0 1212.1 436.9 1214.1 446.7 1216.0 456.5 1218.5 461.5 1220.9 461.5 1223.9 458.5 1226.8 450.7 1229.8 443.8 1232.2 437.9 1233.7 432.0 1237.6 427.1 1242.0 421.2 1245.5 418.3 1249.4 414.8 1254.3 408.5 1258.2 401.6 1262.2 395.7 1265.6 390.3 1310.0 389.8 1310.0 389.8 1311.0 384.4 L1312 366" stroke="#000" stroke-width="2.2" fill="none" stroke-linejoin="round"/><path d="M61.0 518.3 C61.9 519.3 64.3 523.5 66.5 524.3 C68.8 525.1 71.4 523.3 74.7 523.2 C77.9 523.1 83.2 522.8 86.2 523.7 C89.3 524.7 90.7 527.0 93.2 528.9 C95.7 530.8 98.9 533.3 101.2 535.3 C103.6 537.3 105.1 538.6 107.0 541.1 C109.0 543.6 111.1 547.2 112.8 550.3 C114.4 553.4 115.4 556.1 116.8 559.5 C118.1 562.9 119.3 566.5 120.8 570.4 C122.2 574.3 123.6 578.4 125.2 582.9 C126.8 587.4 128.8 592.7 130.4 597.4 C132.0 602.1 132.9 606.4 134.5 610.9 C136.1 615.4 137.7 619.7 139.7 624.4 C141.7 629.1 144.4 636.1 146.3 639.2 C148.3 642.3 149.7 642.6 151.2 643.1 C152.7 643.6 153.9 643.8 155.3 642.1 C156.7 640.4 157.9 636.3 159.5 632.7 C161.1 629.1 163.0 624.1 164.7 620.3 C166.4 616.5 168.2 612.6 169.9 609.9 C171.6 607.2 173.0 605.7 175.1 604.2 C177.2 602.7 179.9 601.8 182.3 601.0 C184.7 600.2 187.5 600.2 189.6 599.5 C191.7 598.8 192.7 598.4 194.8 596.9 C196.9 595.4 199.7 592.9 202.1 590.6 C204.5 588.3 207.2 585.4 209.3 582.9 C211.4 580.4 213.1 577.9 214.5 575.6 C215.9 573.4 216.6 571.8 217.7 569.4 C218.8 567.0 219.9 564.1 221.1 561.0 C222.2 557.9 223.3 555.1 224.8 551.0 C226.2 546.9 227.8 541.6 229.6 536.5 C231.4 531.4 233.7 525.3 235.4 520.3 C237.1 515.3 238.3 511.0 240.0 506.4 C241.7 501.8 244.1 497.0 245.8 492.6 C247.5 488.2 249.1 483.2 250.4 479.9 C251.8 476.6 252.8 474.7 253.9 472.9 C255.1 471.1 256.2 468.5 257.3 468.9 C258.4 469.3 259.8 472.4 260.8 475.2 C261.8 478.0 262.3 481.8 263.1 485.6 C263.9 489.5 264.4 494.5 265.4 498.3 C266.4 502.1 267.8 505.4 268.9 508.7 C270.1 512.0 270.8 515.4 272.3 518.0 C273.8 520.6 275.8 523.4 278.1 524.3 C280.4 525.2 282.9 523.3 286.2 523.2 C289.5 523.1 294.7 522.8 297.8 523.7 C300.9 524.7 302.2 527.0 304.7 528.9 C307.2 530.8 310.5 533.3 312.8 535.3 C315.1 537.3 316.7 538.6 318.6 541.1 C320.5 543.6 322.7 547.2 324.3 550.3 C325.9 553.4 327.0 556.1 328.3 559.5 C329.6 562.9 330.9 566.5 332.3 570.4 C333.7 574.3 335.1 578.4 336.8 582.9 C338.4 587.4 340.4 592.7 342.0 597.4 C343.5 602.1 344.5 606.4 346.1 610.9 C347.6 615.4 349.3 619.7 351.2 624.4 C353.2 629.1 356.0 636.1 357.9 639.2 C359.8 642.3 361.3 642.6 362.8 643.1 C364.2 643.6 365.5 643.8 366.9 642.1 C368.2 640.4 369.5 636.3 371.1 632.7 C372.6 629.1 374.5 624.1 376.2 620.3 C378.0 616.5 379.7 612.6 381.5 609.9 C383.2 607.2 384.6 605.7 386.6 604.2 C388.7 602.7 391.4 601.8 393.9 601.0 C396.3 600.2 399.1 600.2 401.1 599.5 C403.2 598.8 404.3 598.4 406.4 596.9 C408.4 595.4 411.2 592.9 413.6 590.6 C416.1 588.3 418.8 585.4 420.9 582.9 C422.9 580.4 424.7 577.9 426.1 575.6 C427.4 573.4 428.2 571.8 429.2 569.4 C430.3 567.0 431.4 564.1 432.6 561.0 C433.8 557.9 434.9 555.1 436.3 551.0 C437.7 546.9 439.4 541.6 441.1 536.5 C442.9 531.4 445.2 525.3 447.0 520.3 C448.7 515.3 449.8 511.0 451.6 506.4 C453.3 501.8 455.6 497.0 457.4 492.6 C459.1 488.2 460.6 483.2 462.0 479.9 C463.3 476.6 464.3 474.7 465.5 472.9 C466.6 471.1 467.7 468.5 468.9 468.9 C470.0 469.3 471.4 472.4 472.4 475.2 C473.3 478.0 473.9 481.8 474.7 485.6 C475.4 489.5 476.0 494.5 477.0 498.3 C477.9 502.1 479.3 505.4 480.5 508.7 C481.6 512.0 482.3 515.4 483.9 518.0 C485.4 520.6 487.3 523.4 489.7 524.3 C492.0 525.2 494.5 523.3 497.8 523.2 C501.0 523.1 506.3 522.8 509.4 523.7 C512.4 524.7 513.8 527.0 516.2 528.9 C518.8 530.8 522.0 533.3 524.4 535.3 C526.7 537.3 528.2 538.6 530.1 541.1 C532.1 543.6 534.2 547.2 535.9 550.3 C537.5 553.4 538.5 556.1 539.9 559.5 C541.2 562.9 542.4 566.5 543.9 570.4 C545.3 574.3 546.7 578.4 548.3 582.9 C549.9 587.4 552.0 592.7 553.5 597.4 C555.0 602.1 556.0 606.4 557.6 610.9 C559.2 615.4 560.8 619.7 562.8 624.4 C564.8 629.1 567.5 636.1 569.5 639.2 C571.4 642.3 572.8 642.6 574.3 643.1 C575.8 643.6 577.0 643.8 578.4 642.1 C579.8 640.4 581.0 636.3 582.6 632.7 C584.2 629.1 586.1 624.1 587.8 620.3 C589.5 616.5 591.3 612.6 593.0 609.9 C594.7 607.2 596.1 605.7 598.2 604.2 C600.3 602.7 603.0 601.8 605.4 601.0 C607.8 600.2 610.6 600.2 612.7 599.5 C614.8 598.8 615.8 598.4 617.9 596.9 C620.0 595.4 622.8 592.9 625.2 590.6 C627.6 588.3 630.3 585.4 632.4 582.9 C634.5 580.4 636.2 577.9 637.6 575.6 C639.0 573.4 639.7 571.8 640.8 569.4 C641.9 567.0 643.0 564.1 644.2 561.0 C645.3 557.9 646.4 555.1 647.9 551.0 C649.3 546.9 650.9 541.6 652.7 536.5 C654.5 531.4 656.8 525.3 658.5 520.3 C660.2 515.3 661.4 511.0 663.1 506.4 C664.8 501.8 667.2 497.0 668.9 492.6 C670.6 488.2 672.1 483.2 673.5 479.9 C674.9 476.6 675.9 474.7 677.0 472.9 C678.1 471.1 679.3 468.5 680.4 468.9 C681.6 469.3 682.9 472.4 683.9 475.2 C684.9 478.0 685.4 481.8 686.2 485.6 C687.0 489.5 687.5 494.5 688.5 498.3 C689.5 502.1 690.9 505.4 692.0 508.7 C693.2 512.0 693.9 515.4 695.4 518.0 C696.9 520.6 698.9 523.4 701.2 524.3 C703.5 525.2 706.0 523.3 709.3 523.2 C712.6 523.1 717.8 522.8 720.9 523.7 C724.0 524.7 725.3 527.0 727.8 528.9 C730.3 530.8 733.6 533.3 735.9 535.3 C738.2 537.3 739.8 538.6 741.7 541.1 C743.6 543.6 745.8 547.2 747.4 550.3 C749.0 553.4 750.1 556.1 751.4 559.5 C752.7 562.9 754.0 566.5 755.4 570.4 C756.8 574.3 758.2 578.4 759.9 582.9 C761.5 587.4 763.5 592.7 765.1 597.4 C766.6 602.1 767.6 606.4 769.2 610.9 C770.7 615.4 772.4 619.7 774.4 624.4 C776.3 629.1 779.1 636.1 781.0 639.2 C782.9 642.3 784.4 642.6 785.9 643.1 C787.3 643.6 788.6 643.8 790.0 642.1 C791.3 640.4 792.6 636.3 794.2 632.7 C795.7 629.1 797.6 624.1 799.4 620.3 C801.1 616.5 802.8 612.6 804.6 609.9 C806.3 607.2 807.7 605.7 809.8 604.2 C811.8 602.7 814.5 601.8 817.0 601.0 C819.4 600.2 822.2 600.2 824.3 599.5 C826.3 598.8 827.4 598.4 829.5 596.9 C831.5 595.4 834.3 592.9 836.8 590.6 C839.2 588.3 841.9 585.4 844.0 582.9 C846.0 580.4 847.8 577.9 849.2 575.6 C850.6 573.4 851.3 571.8 852.4 569.4 C853.4 567.0 854.5 564.1 855.7 561.0 C856.9 557.9 858.0 555.1 859.4 551.0 C860.8 546.9 862.5 541.6 864.3 536.5 C866.0 531.4 868.3 525.3 870.1 520.3 C871.8 515.3 872.9 511.0 874.7 506.4 C876.4 501.8 878.7 497.0 880.5 492.6 C882.2 488.2 883.7 483.2 885.1 479.9 C886.4 476.6 887.4 474.7 888.6 472.9 C889.7 471.1 890.8 468.5 892.0 468.9 C893.1 469.3 894.5 472.4 895.5 475.2 C896.4 478.0 897.0 481.8 897.8 485.6 C898.5 489.5 899.1 494.5 900.1 498.3 C901.0 502.1 902.4 505.4 903.6 508.7 C904.7 512.0 905.4 515.4 907.0 518.0 C908.5 520.6 910.4 523.4 912.8 524.3 C915.1 525.2 917.6 523.3 920.9 523.2 C924.1 523.1 929.4 522.8 932.5 523.7 C935.5 524.7 936.9 527.0 939.4 528.9 C941.9 530.8 945.1 533.3 947.5 535.3 C949.8 537.3 951.3 538.6 953.2 541.1 C955.2 543.6 957.3 547.2 959.0 550.3 C960.6 553.4 961.6 556.1 963.0 559.5 C964.3 562.9 965.5 566.5 967.0 570.4 C968.4 574.3 969.8 578.4 971.4 582.9 C973.0 587.4 975.1 592.7 976.6 597.4 C978.1 602.1 979.2 606.4 980.7 610.9 C982.2 615.4 983.9 619.7 985.9 624.4 C987.9 629.1 990.6 636.1 992.6 639.2 C994.5 642.3 995.9 642.6 997.4 643.1 C998.9 643.6 1000.1 643.8 1001.5 642.1 C1002.9 640.4 1004.1 636.3 1005.7 632.7 C1007.3 629.1 1009.2 624.1 1010.9 620.3 C1012.6 616.5 1014.4 612.6 1016.1 609.9 C1017.8 607.2 1019.2 605.7 1021.3 604.2 C1023.4 602.7 1026.1 601.8 1028.5 601.0 C1030.9 600.2 1033.7 600.2 1035.8 599.5 C1037.9 598.8 1038.9 598.4 1041.0 596.9 C1043.1 595.4 1045.9 592.9 1048.3 590.6 C1050.7 588.3 1053.4 585.4 1055.5 582.9 C1057.6 580.4 1059.3 577.9 1060.7 575.6 C1062.1 573.4 1062.8 571.8 1063.9 569.4 C1065.0 567.0 1066.1 564.1 1067.2 561.0 C1068.4 557.9 1069.5 555.1 1071.0 551.0 C1072.4 546.9 1074.0 541.6 1075.8 536.5 C1077.6 531.4 1079.9 525.3 1081.6 520.3 C1083.3 515.3 1084.5 511.0 1086.2 506.4 C1087.9 501.8 1090.3 497.0 1092.0 492.6 C1093.7 488.2 1095.2 483.2 1096.6 479.9 C1098.0 476.6 1099.0 474.7 1100.1 472.9 C1101.2 471.1 1102.3 468.5 1103.5 468.9 C1104.7 469.3 1106.0 472.4 1107.0 475.2 C1108.0 478.0 1108.5 481.8 1109.3 485.6 C1110.1 489.5 1110.6 494.5 1111.6 498.3 C1112.6 502.1 1113.9 505.4 1115.1 508.7 C1116.2 512.0 1117.0 515.4 1118.5 518.0 C1120.0 520.6 1122.0 523.4 1124.3 524.3 C1126.6 525.2 1129.1 523.3 1132.4 523.2 C1135.7 523.1 1140.9 522.8 1144.0 523.7 C1147.1 524.7 1148.4 527.0 1150.9 528.9 C1153.4 530.8 1156.7 533.3 1159.0 535.3 C1161.3 537.3 1162.9 538.6 1164.8 541.1 C1166.7 543.6 1168.9 547.2 1170.5 550.3 C1172.1 553.4 1173.2 556.1 1174.5 559.5 C1175.8 562.9 1177.1 566.5 1178.5 570.4 C1179.9 574.3 1181.3 578.4 1183.0 582.9 C1184.6 587.4 1186.6 592.7 1188.2 597.4 C1189.7 602.1 1190.7 606.4 1192.2 610.9 C1193.8 615.4 1195.5 619.7 1197.5 624.4 C1199.4 629.1 1202.2 636.1 1204.1 639.2 C1206.0 642.3 1207.5 642.6 1209.0 643.1 C1210.4 643.6 1211.7 643.8 1213.0 642.1 C1214.4 640.4 1215.7 636.3 1217.2 632.7 C1218.8 629.1 1220.7 624.1 1222.5 620.3 C1224.2 616.5 1225.9 612.6 1227.7 609.9 C1229.4 607.2 1230.8 605.7 1232.8 604.2 C1234.9 602.7 1237.6 601.8 1240.0 601.0 C1242.5 600.2 1245.3 600.2 1247.3 599.5 C1249.4 598.8 1250.5 598.4 1252.5 596.9 C1254.6 595.4 1257.4 592.9 1259.8 590.6 C1262.3 588.3 1265.0 585.4 1267.0 582.9 C1269.1 580.4 1270.8 577.9 1272.2 575.6 C1273.7 573.4 1274.4 571.8 1275.5 569.4 C1276.5 567.0 1277.6 564.1 1278.8 561.0 C1280.0 557.9 1281.1 555.1 1282.5 551.0 C1283.9 546.9 1285.6 541.6 1287.3 536.5 C1289.1 531.4 1291.4 525.3 1293.2 520.3 C1294.9 515.3 1296.0 511.0 1297.8 506.4 C1299.5 501.8 1301.8 497.0 1303.5 492.6 C1305.3 488.2 1306.9 483.0 1308.2 479.9 C1309.4 476.8 1310.5 475.2 1311.0 474.2 L1312.5 470.8" stroke="#000" stroke-width="2.0" fill="none" stroke-linejoin="round"/><path d="M61.0 755.7 61.5 762.2 64.7 783.0 67.8 793.4 75.0 796.5 83.3 800.7 89.5 806.9 95.8 816.3 101.0 823.0 102.8 823.3 141.1 823.3 141.5 809.6 143.1 798.3 147.1 788.6 149.5 775.7 152.0 754.7 153.6 738.5 155.2 723.9 156.8 712.6 158.9 708.1 161.7 711.0 164.1 719.9 166.5 738.5 169.7 754.7 172.2 767.6 175.4 782.1 181.9 791.8 188.3 799.1 194.8 806.4 201.3 815.3 206.9 823.3 252.3 823.3 252.3 823.3 254.4 795.5 256.4 758.1 258.5 708.2 260.6 670.8 262.7 655.2 264.7 666.6 267.9 699.9 271.0 737.3 273.1 762.2 276.2 783.0 279.3 793.4 286.6 796.5 294.9 800.7 301.1 806.9 307.3 816.3 312.5 823.0 314.3 823.3 352.6 823.3 353.1 809.6 354.6 798.3 358.6 788.6 361.1 775.7 363.6 754.7 365.1 738.5 366.8 723.9 368.4 712.6 370.5 708.1 373.2 711.0 375.6 719.9 378.1 738.5 381.2 754.7 383.8 767.6 387.0 782.1 393.5 791.8 399.9 799.1 406.4 806.4 412.9 815.3 418.5 823.3 463.9 823.3 463.9 823.3 466.0 795.5 468.0 758.1 470.1 708.2 472.2 670.8 474.2 655.2 476.2 666.6 479.5 699.9 482.6 737.3 484.7 762.2 487.8 783.0 490.9 793.4 498.2 796.5 506.5 800.7 512.6 806.9 518.9 816.3 524.1 823.0 525.9 823.3 564.2 823.3 564.6 809.6 566.2 798.3 570.2 788.6 572.6 775.7 575.1 754.7 576.7 738.5 578.3 723.9 579.9 712.6 582.0 708.1 584.8 711.0 587.2 719.9 589.6 738.5 592.8 754.7 595.3 767.6 598.5 782.1 605.0 791.8 611.4 799.1 617.9 806.4 624.4 815.3 630.0 823.3 675.4 823.3 675.4 823.3 677.5 795.5 679.5 758.1 681.6 708.2 683.7 670.8 685.8 655.2 687.8 666.6 691.0 699.9 694.1 737.3 696.2 762.2 699.3 783.0 702.4 793.4 709.7 796.5 718.0 800.7 724.2 806.9 730.4 816.3 735.6 823.0 737.4 823.3 775.8 823.3 776.2 809.6 777.8 798.3 781.8 788.6 784.2 775.7 786.7 754.7 788.3 738.5 789.9 723.9 791.5 712.6 793.6 708.1 796.4 711.0 798.8 719.9 801.2 738.5 804.4 754.7 806.9 767.6 810.1 782.1 816.6 791.8 823.0 799.1 829.5 806.4 836.0 815.3 841.6 823.3 887.0 823.3 887.0 823.3 889.1 795.5 891.1 758.1 893.2 708.2 895.2 670.8 897.4 655.2 899.4 666.6 902.6 699.9 905.7 737.3 907.8 762.2 910.9 783.0 914.0 793.4 921.2 796.5 929.6 800.7 935.8 806.9 942.0 816.3 947.2 823.0 949.0 823.3 987.3 823.3 987.7 809.6 989.3 798.3 993.3 788.6 995.7 775.7 998.2 754.7 999.8 738.5 1001.4 723.9 1003.0 712.6 1005.1 708.1 1007.9 711.0 1010.3 719.9 1012.7 738.5 1015.9 754.7 1018.4 767.6 1021.6 782.1 1028.1 791.8 1034.5 799.1 1041.0 806.4 1047.5 815.3 1053.1 823.3 1098.5 823.3 1098.5 823.3 1100.6 795.5 1102.6 758.1 1104.7 708.2 1106.8 670.8 1108.9 655.2 1110.9 666.6 1114.1 699.9 1117.2 737.3 1119.3 762.2 1122.4 783.0 1125.5 793.4 1132.8 796.5 1141.1 800.7 1147.3 806.9 1153.5 816.3 1158.7 823.0 1160.5 823.3 1198.8 823.3 1199.2 809.6 1200.8 798.3 1204.8 788.6 1207.2 775.7 1209.8 754.7 1211.3 738.5 1213.0 723.9 1214.5 712.6 1216.7 708.1 1219.5 711.0 1221.8 719.9 1224.2 738.5 1227.5 754.7 1230.0 767.6 1233.2 782.1 1239.7 791.8 1246.0 799.1 1252.5 806.4 1259.0 815.3 1264.7 823.3 1310.0 823.3 L1312 774" stroke="#000" stroke-width="2.2" fill="none" stroke-linejoin="round"/></svg>
<div class="t" style="left:485px;top:288px;width:196px;height:20px;background:#fff"></div>
<div class="t" style="left:485px;top:308px;width:108px;height:20px;background:#fff"></div>
<div class="t" style="top:289px;font-size:16.5px;line-height:18.5px;color:#CC0000;letter-spacing:0.76px;left:487px;-webkit-text-stroke:0.45px #CC0000;">4.576 мА, пик 13.75 мА</div>
<div class="t" style="top:309px;font-size:16.5px;line-height:18.5px;color:#0000CC;letter-spacing:0.92px;left:487px;-webkit-text-stroke:0.45px #0000CC;">f=93.541 кГц</div>
<div class="t" style="left:482px;top:469px;width:149px;height:20px;background:#fff"></div>
<div class="t" style="top:470px;font-size:16.5px;line-height:18.5px;color:#CC0000;letter-spacing:0.95px;left:486px;-webkit-text-stroke:0.45px #CC0000;">529 в, пик 1011 в</div>
<div class="t" style="left:485px;top:650px;width:75px;height:20px;background:#fff"></div>
<div class="t" style="top:651px;font-size:16.5px;line-height:18.5px;color:#CC0000;letter-spacing:1.0px;left:487px;-webkit-text-stroke:0.45px #CC0000;">1.871 Вт</div>
<div class="t" style="top:307px;font-size:16px;line-height:18px;color:#000;right:1296px;text-align:right;">10 ма</div>
<div class="t" style="top:345px;font-size:16px;line-height:18px;color:#000;right:1296px;text-align:right;">5 ма</div>
<div class="t" style="top:382px;font-size:16px;line-height:18px;color:#000;font-weight:700;right:1296px;text-align:right;">0 ма</div>
<div class="t" style="top:419px;font-size:16px;line-height:18px;color:#000;right:1296px;text-align:right;">-5 ма</div>
<div class="t" style="top:471px;font-size:16px;line-height:18px;color:#000;right:1296px;text-align:right;">1 000 в</div>
<div class="t" style="top:508px;font-size:16px;line-height:18px;color:#000;right:1296px;text-align:right;">500 в</div>
<div class="t" style="top:553px;font-size:16px;line-height:18px;color:#000;font-weight:700;right:1296px;text-align:right;">0 в</div>
<div class="t" style="top:598px;font-size:16px;line-height:18px;color:#000;right:1296px;text-align:right;">-500 в</div>
<div class="t" style="top:662px;font-size:16px;line-height:18px;color:#000;right:1296px;text-align:right;">10 вт</div>
<div class="t" style="top:692px;font-size:16px;line-height:18px;color:#000;right:1296px;text-align:right;">8 вт</div>
<div class="t" style="top:723px;font-size:16px;line-height:18px;color:#000;right:1296px;text-align:right;">6 вт</div>
<div class="t" style="top:754px;font-size:16px;line-height:18px;color:#000;right:1296px;text-align:right;">4 вт</div>
<div class="t" style="top:785px;font-size:16px;line-height:18px;color:#000;right:1296px;text-align:right;">2 вт</div>
<div class="t" style="top:806px;font-size:16px;line-height:18px;color:#000;font-weight:700;right:1296px;text-align:right;">0 вт</div>
<div class="t" style="top:828px;font-size:16px;line-height:18px;color:#000;left:-181px;width:600px;text-align:center;">120</div>
<div class="t" style="top:828px;font-size:16px;line-height:18px;color:#000;left:-82px;width:600px;text-align:center;">125</div>
<div class="t" style="top:828px;font-size:16px;line-height:18px;color:#000;left:17px;width:600px;text-align:center;">130</div>
<div class="t" style="top:828px;font-size:16px;line-height:18px;color:#000;left:116px;width:600px;text-align:center;">135</div>
<div class="t" style="top:828px;font-size:16px;line-height:18px;color:#000;left:215px;width:600px;text-align:center;">140</div>
<div class="t" style="top:828px;font-size:16px;line-height:18px;color:#000;left:314px;width:600px;text-align:center;">145</div>
<div class="t" style="top:828px;font-size:16px;line-height:18px;color:#000;left:413px;width:600px;text-align:center;">150</div>
<div class="t" style="top:828px;font-size:16px;line-height:18px;color:#000;left:512px;width:600px;text-align:center;">155</div>
<div class="t" style="top:828px;font-size:16px;line-height:18px;color:#000;left:611px;width:600px;text-align:center;">160</div>
<div class="t" style="top:828px;font-size:16px;line-height:18px;color:#000;left:710px;width:600px;text-align:center;">165</div>
<div class="t" style="top:828px;font-size:16px;line-height:18px;color:#000;left:809px;width:600px;text-align:center;">170</div>
<div class="t" style="top:828px;font-size:16px;line-height:18px;color:#000;left:908px;width:600px;text-align:center;">175</div>
<div class="t" style="top:828px;font-size:16px;line-height:18px;color:#000;font-weight:700;letter-spacing:1px;right:19px;text-align:right;">мкс</div>
<div class="t" style="top:365px;font-size:16px;line-height:18px;color:#000;font-weight:700;left:1321px;">I</div>
<div class="t" style="top:546px;font-size:16px;line-height:18px;color:#000;left:1318px;">U</div>
<div class="t" style="top:727px;font-size:16px;line-height:18px;color:#000;left:1319px;">P</div>
<svg style="left:1335px;top:288px" width="16" height="175" shape-rendering="crispEdges"><rect width="16" height="175" fill="#D4D0C8"/><rect width="16" height="175" fill="url(#dith)"/></svg>
<div style="left:1335px;top:288px;width:16px;height:16px;background:#404040"></div>
<div style="left:1335px;top:288px;width:15px;height:15px;background:#D4D0C8"></div>
<div style="left:1336px;top:289px;width:14px;height:14px;background:#808080"></div>
<div style="left:1336px;top:289px;width:13px;height:13px;background:#FFFFFF"></div>
<div style="left:1337px;top:290px;width:12px;height:12px;background:#D4D0C8"></div>
<svg style="left:1339px;top:294px" width="8" height="4"><path d="M0 4h7L3.5 0z" fill="#000"/></svg>
<div style="left:1335px;top:307px;width:16px;height:111px;background:#404040"></div>
<div style="left:1335px;top:307px;width:15px;height:110px;background:#D4D0C8"></div>
<div style="left:1336px;top:308px;width:14px;height:109px;background:#808080"></div>
<div style="left:1336px;top:308px;width:13px;height:108px;background:#FFFFFF"></div>
<div style="left:1337px;top:309px;width:12px;height:107px;background:#D4D0C8"></div>
<div style="left:1335px;top:423px;width:16px;height:16px;background:#404040"></div>
<div style="left:1335px;top:423px;width:15px;height:15px;background:#D4D0C8"></div>
<div style="left:1336px;top:424px;width:14px;height:14px;background:#808080"></div>
<div style="left:1336px;top:424px;width:13px;height:13px;background:#FFFFFF"></div>
<div style="left:1337px;top:425px;width:12px;height:12px;background:#D4D0C8"></div>
<svg style="left:1339px;top:429px" width="8" height="4"><path d="M0 0h7L3.5 4z" fill="#000"/></svg>
<div style="left:1335px;top:439px;width:16px;height:12px;background:#404040"></div>
<div style="left:1335px;top:439px;width:15px;height:11px;background:#D4D0C8"></div>
<div style="left:1336px;top:440px;width:14px;height:10px;background:#808080"></div>
<div style="left:1336px;top:440px;width:13px;height:9px;background:#FFFFFF"></div>
<div style="left:1337px;top:441px;width:12px;height:8px;background:#D4D0C8"></div>
<svg style="left:1340px;top:443px" width="6" height="3"><path d="M0 3h5L2.5 0z" fill="#000"/></svg>
<div style="left:1335px;top:451px;width:16px;height:12px;background:#404040"></div>
<div style="left:1335px;top:451px;width:15px;height:11px;background:#D4D0C8"></div>
<div style="left:1336px;top:452px;width:14px;height:10px;background:#808080"></div>
<div style="left:1336px;top:452px;width:13px;height:9px;background:#FFFFFF"></div>
<div style="left:1337px;top:453px;width:12px;height:8px;background:#D4D0C8"></div>
<svg style="left:1340px;top:455px" width="6" height="3"><path d="M0 0h5L2.5 3z" fill="#000"/></svg>
<svg style="left:1335px;top:469px" width="16" height="175" shape-rendering="crispEdges"><rect width="16" height="175" fill="#D4D0C8"/><rect width="16" height="175" fill="url(#dith)"/></svg>
<div style="left:1335px;top:469px;width:16px;height:16px;background:#404040"></div>
<div style="left:1335px;top:469px;width:15px;height:15px;background:#D4D0C8"></div>
<div style="left:1336px;top:470px;width:14px;height:14px;background:#808080"></div>
<div style="left:1336px;top:470px;width:13px;height:13px;background:#FFFFFF"></div>
<div style="left:1337px;top:471px;width:12px;height:12px;background:#D4D0C8"></div>
<svg style="left:1339px;top:475px" width="8" height="4"><path d="M0 4h7L3.5 0z" fill="#000"/></svg>
<div style="left:1335px;top:485px;width:16px;height:118px;background:#404040"></div>
<div style="left:1335px;top:485px;width:15px;height:117px;background:#D4D0C8"></div>
<div style="left:1336px;top:486px;width:14px;height:116px;background:#808080"></div>
<div style="left:1336px;top:486px;width:13px;height:115px;background:#FFFFFF"></div>
<div style="left:1337px;top:487px;width:12px;height:114px;background:#D4D0C8"></div>
<div style="left:1335px;top:603px;width:16px;height:16px;background:#404040"></div>
<div style="left:1335px;top:603px;width:15px;height:15px;background:#D4D0C8"></div>
<div style="left:1336px;top:604px;width:14px;height:14px;background:#808080"></div>
<div style="left:1336px;top:604px;width:13px;height:13px;background:#FFFFFF"></div>
<div style="left:1337px;top:605px;width:12px;height:12px;background:#D4D0C8"></div>
<svg style="left:1339px;top:609px" width="8" height="4"><path d="M0 0h7L3.5 4z" fill="#000"/></svg>
<div style="left:1335px;top:618px;width:16px;height:13px;background:#404040"></div>
<div style="left:1335px;top:618px;width:15px;height:12px;background:#D4D0C8"></div>
<div style="left:1336px;top:619px;width:14px;height:11px;background:#808080"></div>
<div style="left:1336px;top:619px;width:13px;height:10px;background:#FFFFFF"></div>
<div style="left:1337px;top:620px;width:12px;height:9px;background:#D4D0C8"></div>
<svg style="left:1340px;top:622px" width="6" height="3"><path d="M0 3h5L2.5 0z" fill="#000"/></svg>
<div style="left:1335px;top:631px;width:16px;height:13px;background:#404040"></div>
<div style="left:1335px;top:631px;width:15px;height:12px;background:#D4D0C8"></div>
<div style="left:1336px;top:632px;width:14px;height:11px;background:#808080"></div>
<div style="left:1336px;top:632px;width:13px;height:10px;background:#FFFFFF"></div>
<div style="left:1337px;top:633px;width:12px;height:9px;background:#D4D0C8"></div>
<svg style="left:1340px;top:635px" width="6" height="3"><path d="M0 0h5L2.5 3z" fill="#000"/></svg>
<svg style="left:1335px;top:650px" width="16" height="196" shape-rendering="crispEdges"><rect width="16" height="196" fill="#D4D0C8"/><rect width="16" height="196" fill="url(#dith)"/></svg>
<div style="left:1335px;top:650px;width:16px;height:16px;background:#404040"></div>
<div style="left:1335px;top:650px;width:15px;height:15px;background:#D4D0C8"></div>
<div style="left:1336px;top:651px;width:14px;height:14px;background:#808080"></div>
<div style="left:1336px;top:651px;width:13px;height:13px;background:#FFFFFF"></div>
<div style="left:1337px;top:652px;width:12px;height:12px;background:#D4D0C8"></div>
<svg style="left:1339px;top:656px" width="8" height="4"><path d="M0 4h7L3.5 0z" fill="#000"/></svg>
<div style="left:1335px;top:671px;width:16px;height:134px;background:#404040"></div>
<div style="left:1335px;top:671px;width:15px;height:133px;background:#D4D0C8"></div>
<div style="left:1336px;top:672px;width:14px;height:132px;background:#808080"></div>
<div style="left:1336px;top:672px;width:13px;height:131px;background:#FFFFFF"></div>
<div style="left:1337px;top:673px;width:12px;height:130px;background:#D4D0C8"></div>
<div style="left:1335px;top:805px;width:16px;height:16px;background:#404040"></div>
<div style="left:1335px;top:805px;width:15px;height:15px;background:#D4D0C8"></div>
<div style="left:1336px;top:806px;width:14px;height:14px;background:#808080"></div>
<div style="left:1336px;top:806px;width:13px;height:13px;background:#FFFFFF"></div>
<div style="left:1337px;top:807px;width:12px;height:12px;background:#D4D0C8"></div>
<svg style="left:1339px;top:811px" width="8" height="4"><path d="M0 0h7L3.5 4z" fill="#000"/></svg>
<div style="left:1335px;top:821px;width:16px;height:12px;background:#404040"></div>
<div style="left:1335px;top:821px;width:15px;height:11px;background:#D4D0C8"></div>
<div style="left:1336px;top:822px;width:14px;height:10px;background:#808080"></div>
<div style="left:1336px;top:822px;width:13px;height:9px;background:#FFFFFF"></div>
<div style="left:1337px;top:823px;width:12px;height:8px;background:#D4D0C8"></div>
<svg style="left:1340px;top:825px" width="6" height="3"><path d="M0 3h5L2.5 0z" fill="#000"/></svg>
<div style="left:1335px;top:833px;width:16px;height:13px;background:#404040"></div>
<div style="left:1335px;top:833px;width:15px;height:12px;background:#D4D0C8"></div>
<div style="left:1336px;top:834px;width:14px;height:11px;background:#808080"></div>
<div style="left:1336px;top:834px;width:13px;height:10px;background:#FFFFFF"></div>
<div style="left:1337px;top:835px;width:12px;height:9px;background:#D4D0C8"></div>
<svg style="left:1340px;top:837px" width="6" height="3"><path d="M0 0h5L2.5 3z" fill="#000"/></svg>
<svg style="left:4px;top:846px" width="1347" height="16" shape-rendering="crispEdges"><rect width="1347" height="16" fill="#D4D0C8"/><rect width="1347" height="16" fill="url(#dith)"/></svg>
<div style="left:4px;top:846px;width:16px;height:16px;background:#404040"></div>
<div style="left:4px;top:846px;width:15px;height:15px;background:#D4D0C8"></div>
<div style="left:5px;top:847px;width:14px;height:14px;background:#808080"></div>
<div style="left:5px;top:847px;width:13px;height:13px;background:#FFFFFF"></div>
<div style="left:6px;top:848px;width:12px;height:12px;background:#D4D0C8"></div>
<svg style="left:10px;top:850px" width="4" height="8"><path d="M4 0v7L0 3.5z" fill="#000"/></svg>
<div style="left:20px;top:846px;width:16px;height:16px;background:#404040"></div>
<div style="left:20px;top:846px;width:15px;height:15px;background:#D4D0C8"></div>
<div style="left:21px;top:847px;width:14px;height:14px;background:#808080"></div>
<div style="left:21px;top:847px;width:13px;height:13px;background:#FFFFFF"></div>
<div style="left:22px;top:848px;width:12px;height:12px;background:#D4D0C8"></div>
<svg style="left:26px;top:850px" width="4" height="8"><path d="M0 0v7L4 3.5z" fill="#000"/></svg>
<div style="left:36px;top:846px;width:16px;height:16px;background:#404040"></div>
<div style="left:36px;top:846px;width:15px;height:15px;background:#D4D0C8"></div>
<div style="left:37px;top:847px;width:14px;height:14px;background:#808080"></div>
<div style="left:37px;top:847px;width:13px;height:13px;background:#FFFFFF"></div>
<div style="left:38px;top:848px;width:12px;height:12px;background:#D4D0C8"></div>
<svg style="left:42px;top:850px" width="4" height="8"><path d="M4 0v7L0 3.5z" fill="#000"/></svg>
<div style="left:573px;top:846px;width:280px;height:16px;background:#404040"></div>
<div style="left:573px;top:846px;width:279px;height:15px;background:#D4D0C8"></div>
<div style="left:574px;top:847px;width:278px;height:14px;background:#808080"></div>
<div style="left:574px;top:847px;width:277px;height:13px;background:#FFFFFF"></div>
<div style="left:575px;top:848px;width:276px;height:12px;background:#D4D0C8"></div>
<div style="left:1335px;top:846px;width:16px;height:16px;background:#404040"></div>
<div style="left:1335px;top:846px;width:15px;height:15px;background:#D4D0C8"></div>
<div style="left:1336px;top:847px;width:14px;height:14px;background:#808080"></div>
<div style="left:1336px;top:847px;width:13px;height:13px;background:#FFFFFF"></div>
<div style="left:1337px;top:848px;width:12px;height:12px;background:#D4D0C8"></div>
<svg style="left:1341px;top:850px" width="4" height="8"><path d="M0 0v7L4 3.5z" fill="#000"/></svg>
</body></html>
